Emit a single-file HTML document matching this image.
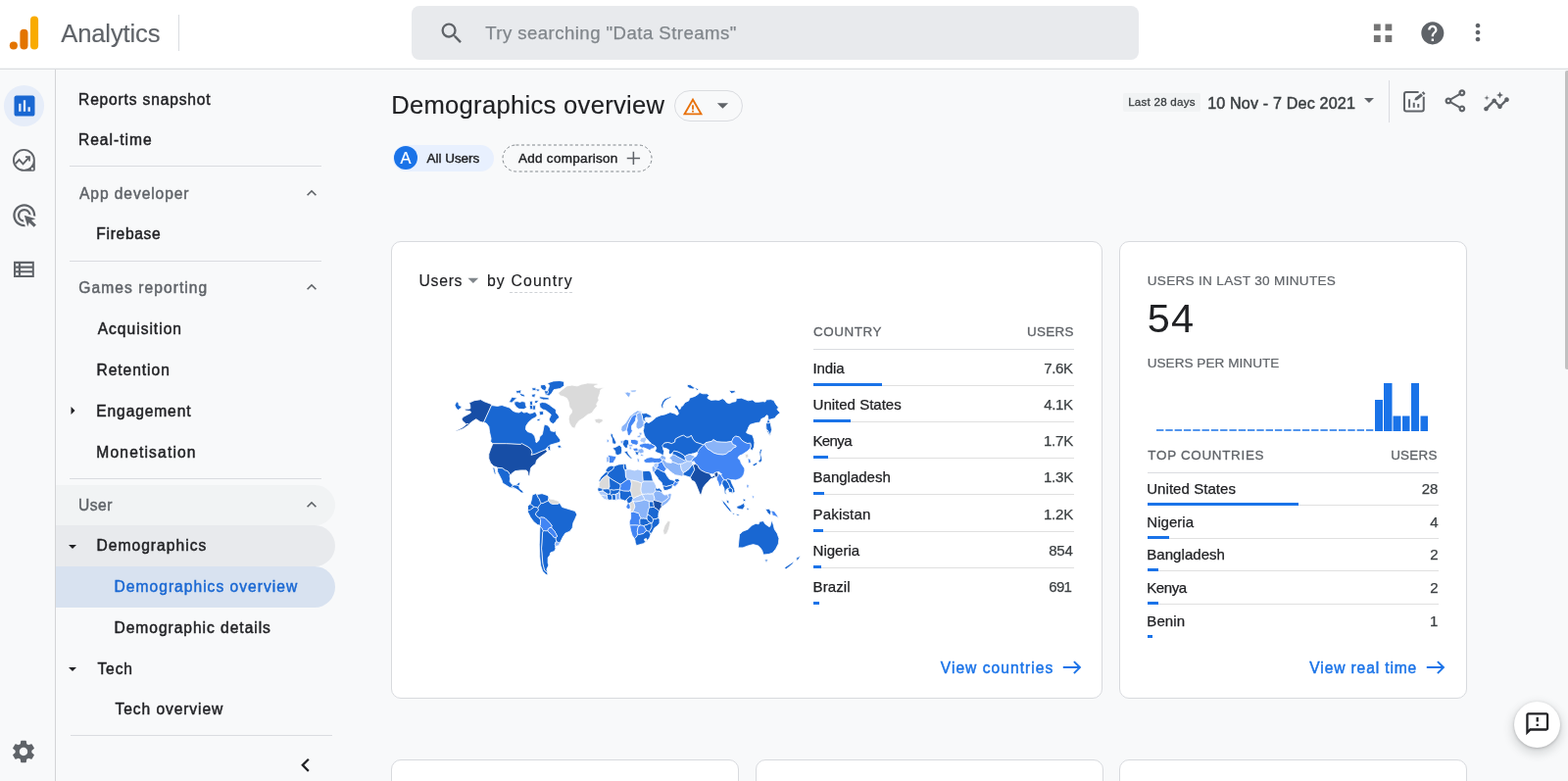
<!DOCTYPE html>
<html lang="en">
<head>
<meta charset="utf-8">
<title>Analytics – Demographics overview</title>
<style>
*{box-sizing:border-box;margin:0;padding:0}
html,body{width:1600px;height:797px;overflow:hidden;background:#f8f9fa}
body{font-family:"Liberation Sans",Arial,sans-serif;color:#202124;position:relative;-webkit-font-smoothing:antialiased}
#txt{position:absolute;left:0;top:0;width:1600px;height:797px;will-change:transform}
.abs{position:absolute}
.t{position:absolute;white-space:nowrap;line-height:1}
svg{display:block;position:absolute}
#header{left:0;top:0;width:1600px;height:71px;background:#fff;border-bottom:1px solid #dcdee1;box-shadow:inset 0 -1px 0 #f3f4f5}
#search{left:420px;top:6px;width:742px;height:55px;background:#e8eaed;border-radius:8px}
#rail{left:0;top:71px;width:57px;height:726px;background:#f8f9fa;border-right:1px solid #d3d4d6}
.nav{font-size:16px;color:#202124;letter-spacing:.25px}
.navh{font-size:16px;color:#5f6368;letter-spacing:.25px}
.hr{position:absolute;height:1px;background:#dadce0}
.card{position:absolute;background:#fff;border:1px solid #d8dade;border-radius:10px}
.th{font-size:12.5px;letter-spacing:1.1px;color:#5f6368}
.td{font-size:14.5px;color:#202124;letter-spacing:.1px}
.bar{position:absolute;height:3px;background:#1a73e8}
.rl{position:absolute;height:1px;background:#e0e0e0}
.link{font-size:16px;color:#1a73e8;letter-spacing:.3px}
</style>
</head>
<body>
<!-- header -->
<div id="header" class="abs"></div>
<svg style="left:8px;top:15px" width="34" height="38" viewBox="0 0 34 38">
  <rect x="23" y="1.500" width="8.100" height="34.100" rx="4.050" fill="#f9ab00"/>
  <rect x="12.400" y="14.700" width="8.100" height="20.900" rx="4.050" fill="#e37400"/>
  <circle cx="5.850" cy="31.550" r="4.050" fill="#e37400"/>
</svg>
<div class="abs" style="left:182px;top:15px;width:1px;height:37px;background:#dadce0"></div>
<div id="search" class="abs"></div>
<svg style="left:447px;top:20px" width="28" height="28" viewBox="0 0 24 24" fill="#5f6368"><path d="M15.5 14h-.79l-.28-.27A6.471 6.471 0 0 0 16 9.5 6.5 6.5 0 1 0 9.500 16c1.610 0 3.090-.59 4.230-1.570l.27.28v.79l5 4.990L20.490 19l-4.990-5zm-6 0C7.010 14 5 11.990 5 9.500S7.010 5 9.500 5 14 7.010 14 9.500 11.990 14 9.500 14z"/></svg>
<svg style="left:1401px;top:24px" width="20" height="20" viewBox="0 0 20 20" fill="#757575"><path d="M.9.400h6.800v6.800H.9zM12.500.400h6.800v6.800h-6.800zM.9 12.100h6.800v6.800H.9zM12.500 12.100h6.800v6.800h-6.800z"/></svg>
<svg style="left:1447.900px;top:19.600px" width="27.700" height="27.700" viewBox="0 0 24 24" fill="#5f6368"><path d="M12 2C6.480 2 2 6.480 2 12s4.480 10 10 10 10-4.480 10-10S17.520 2 12 2zm1 17h-2v-2h2v2zm2.070-7.750-.9.920C13.450 12.900 13 13.500 13 15h-2v-.5c0-1.100.45-2.100 1.170-2.830l1.240-1.260c.37-.36.59-.86.59-1.410 0-1.100-.9-2-2-2s-2 .9-2 2H8c0-2.210 1.790-4 4-4s4 1.790 4 4c0 .88-.36 1.680-.93 2.250z"/></svg>
<svg style="left:1494.400px;top:19.300px" width="28" height="28" viewBox="0 0 24 24" fill="#5f6368"><path d="M12 8c1.100 0 2-.9 2-2s-.9-2-2-2-2 .9-2 2 .9 2 2 2zm0 2c-1.100 0-2 .9-2 2s.9 2 2 2 2-.9 2-2-.9-2-2-2zm0 6c-1.100 0-2 .9-2 2s.9 2 2 2 2-.9 2-2-.9-2-2-2z"/></svg>

<!-- left rail -->
<div id="rail" class="abs"></div>
<div class="abs" style="left:3.500px;top:87.100px;width:41.800px;height:41.800px;border-radius:50%;background:#e6edf9"></div>
<svg style="left:10.700px;top:93.700px" width="28" height="28" viewBox="0 0 24 24" fill="#1967d2"><path d="M19 3H5c-1.100 0-2 .9-2 2v14c0 1.100.9 2 2 2h14c1.100 0 2-.9 2-2V5c0-1.100-.9-2-2-2zM9 17H7v-7h2v7zm4 0h-2V7h2v10zm4 0h-2v-4h2v4z"/></svg>
<svg style="left:11px;top:150px" width="27" height="27" viewBox="11 150 27 27">
  <path fill="#5f6368" fill-rule="evenodd" d="M24.400 152A11.400 11.400 0 1 0 24.400 174.800H34Q35.800 174.800 35.800 173V163.400A11.400 11.400 0 0 0 24.400 152ZM24.400 153.850A9.550 9.550 0 1 1 24.400 172.950A9.550 9.550 0 1 1 24.400 153.850ZM33 171.100A1.200 1.200 0 1 0 33 173.500A1.200 1.200 0 1 0 33 171.100Z"/>
  <path fill="none" stroke="#5f6368" stroke-width="2" d="M15.700 167.200 19.600 162.900 23.500 167.300 29.600 160.600"/>
  <path fill="#5f6368" d="M26 159.200H30.900V164.600H29.200V162.400L27.900 160.900H26Z"/>
</svg>
<svg style="left:10.600px;top:205.500px" width="27.600" height="27.600" viewBox="0 0 24 24" fill="#5f6368"><path d="M11.710 17.990A5.993 5.993 0 0 1 6 12c0-3.310 2.690-6 6-6 3.220 0 5.840 2.530 5.990 5.710l-2.100-.63a3.999 3.999 0 1 0-4.810 4.810l.63 2.100zM22 12c0 .3-.01.6-.04.9l-1.970-.59c.01-.1.01-.21.01-.31 0-4.420-3.580-8-8-8s-8 3.580-8 8 3.580 8 8 8c.1 0 .21 0 .31-.01l.59 1.970c-.3.03-.6.04-.9.040-5.520 0-10-4.480-10-10S6.480 2 12 2s10 4.480 10 10zm-3.770 4.260L22 15l-10-3 3 10 1.260-3.770 4.270 4.270 1.980-1.980-4.280-4.260z"/></svg>
<svg style="left:11px;top:262px" width="27" height="27" viewBox="11 262 27 27">
  <path fill="#5f6368" fill-rule="evenodd" d="M14 266.800H34.800V283H14ZM16 269V271.600H18.800V269ZM21 269V271.600H32.800V269ZM16 273.700V276.300H18.800V273.700ZM21 273.700V276.300H32.800V273.700ZM16 278.300V280.900H18.800V278.300ZM21 278.300V280.900H32.800V278.300Z"/>
</svg>
<svg style="left:10.300px;top:753.200px" width="28" height="28" viewBox="0 0 24 24" fill="#5f6368"><path d="M19.140 12.940c.04-.3.06-.61.06-.94 0-.32-.02-.64-.07-.94l2.030-1.580a.49.49 0 0 0 .12-.61l-1.920-3.320a.488.488 0 0 0-.59-.22l-2.390.96c-.5-.38-1.030-.7-1.620-.94l-.36-2.540a.484.484 0 0 0-.48-.41h-3.840c-.24 0-.43.17-.47.41l-.36 2.540c-.59.24-1.130.57-1.620.94l-2.390-.96c-.22-.08-.47 0-.59.22L2.740 8.870c-.12.21-.08.47.12.61l2.030 1.580c-.05.3-.09.63-.09.940s.02.640.07.940l-2.030 1.580a.49.49 0 0 0-.12.610l1.920 3.320c.12.22.37.29.59.22l2.390-.96c.5.38 1.030.7 1.620.94l.36 2.540c.05.240.24.410.48.410h3.840c.24 0 .44-.17.47-.41l.36-2.540c.59-.24 1.130-.56 1.620-.94l2.390.96c.22.080.47 0 .59-.22l1.920-3.320c.12-.22.07-.47-.12-.61l-2.010-1.580zM12 15.600c-1.980 0-3.600-1.620-3.600-3.600s1.620-3.600 3.600-3.600 3.600 1.620 3.600 3.600-1.620 3.600-3.600 3.600z"/></svg>

<!-- nav -->
<div class="abs" style="left:57px;top:495px;width:285px;height:41px;background:#f1f3f4;border-radius:0 21px 21px 0"></div>
<div class="abs" style="left:57px;top:536px;width:285px;height:42px;background:#e8eaed;border-radius:0 21px 21px 0"></div>
<div class="abs" style="left:57px;top:578px;width:285px;height:42px;background:#d8e2f0;border-radius:0 21px 21px 0"></div>
<div class="hr" style="left:71px;top:169px;width:257px"></div>
<div class="hr" style="left:71px;top:266px;width:257px"></div>
<div class="hr" style="left:71px;top:488px;width:257px"></div>
<div class="hr" style="left:72px;top:750px;width:267px"></div>
<svg style="left:308px;top:187px" width="20" height="20" viewBox="0 0 24 24" fill="#5f6368"><path d="m12 8-6 6 1.410 1.410L12 10.830l4.590 4.580L18 14z"/></svg>
<svg style="left:308px;top:283px" width="20" height="20" viewBox="0 0 24 24" fill="#5f6368"><path d="m12 8-6 6 1.410 1.410L12 10.830l4.590 4.580L18 14z"/></svg>
<svg style="left:308px;top:505px" width="20" height="20" viewBox="0 0 24 24" fill="#5f6368"><path d="m12 8-6 6 1.410 1.410L12 10.830l4.590 4.580L18 14z"/></svg>
<svg style="left:71px;top:414px" width="8" height="10" viewBox="0 0 8 10" fill="#202124"><path d="M1.500 1l4 4-4 4z"/></svg>
<svg style="left:69px;top:554px" width="10" height="8" viewBox="0 0 10 8" fill="#202124"><path d="M1 2h8L5 6z"/></svg>
<svg style="left:69px;top:679px" width="10" height="8" viewBox="0 0 10 8" fill="#202124"><path d="M1 2h8L5 6z"/></svg>
<svg style="left:298.300px;top:767.300px" width="27.500" height="27.500" viewBox="0 0 24 24" fill="#202124"><path d="M15.410 7.410 14 6l-6 6 6 6 1.410-1.410L10.830 12z"/></svg>
<!-- page title row -->
<div class="abs" style="left:688px;top:92px;width:70px;height:32px;border:1px solid #dadce0;border-radius:16px"></div>
<svg style="left:696.200px;top:97.700px" width="22" height="22" viewBox="0 0 24 24" fill="#e8710a"><path d="M12 5.990 19.530 19H4.470L12 5.990M12 2 1 21h22L12 2z"/><path d="M13 16h-2v2h2zM13 10h-2v5h2z"/></svg>
<svg style="left:724px;top:94.200px" width="26.900" height="26.900" viewBox="0 0 24 24" fill="#5f6368"><path d="m7 10 5 5 5-5z"/></svg>

<div class="abs" style="left:1146px;top:95px;width:79px;height:19px;background:#f1f3f4;border-radius:2px"></div>
<svg style="left:1384.800px;top:90.300px" width="24" height="24" viewBox="0 0 24 24" fill="#5f6368"><path d="m7 10 5 5 5-5z"/></svg>
<div class="abs" style="left:1417px;top:82px;width:1px;height:43px;background:#dadce0"></div>
<svg style="left:1428px;top:88px" width="30" height="30" viewBox="1428 88 30 30">
  <path fill="none" stroke="#5f6368" stroke-width="2" d="M1447.600 94H1435Q1433 94 1433 96V111.600Q1433 113.600 1435 113.600H1450.750Q1452.750 113.600 1452.750 111.600V98.800"/>
  <path fill="#5f6368" d="M1437.100 101.250h2v8.500h-2zM1441.750 104.750h2v5h-2zM1446.250 106h2v3.750h-2z"/>
  <path fill="#5f6368" d="M1443.25 102.30 1446.02 102.13 1451.89 97.63 1450.01 95.17 1444.13 99.67Z"/>
  <path fill="#5f6368" d="M1452.69 97.03 1454.43 95.69 1452.55 93.23 1450.80 94.56Z"/>
</svg>
<svg style="left:1471px;top:89.200px" width="27.800" height="27.800" viewBox="0 0 24 24" fill="#5f6368"><path d="M18 16.080c-.76 0-1.440.3-1.960.77L8.910 12.700c.05-.23.09-.46.09-.7s-.04-.47-.09-.7l7.050-4.110c.54.5 1.250.81 2.040.81 1.660 0 3-1.340 3-3s-1.340-3-3-3-3 1.340-3 3c0 .24.04.47.09.7L8.040 9.810C7.500 9.310 6.790 9 6 9c-1.660 0-3 1.340-3 3s1.340 3 3 3c.79 0 1.500-.31 2.040-.81l7.120 4.160c-.05.21-.08.43-.08.65 0 1.610 1.310 2.920 2.920 2.920s2.920-1.310 2.920-2.920c0-1.610-1.310-2.920-2.920-2.920zM18 4c.55 0 1 .45 1 1s-.45 1-1 1-1-.45-1-1 .45-1 1-1zM6 13c-.55 0-1-.45-1-1s.45-1 1-1 1 .45 1 1-.45 1-1 1zm12 7.020c-.55 0-1-.45-1-1s.45-1 1-1 1 .45 1 1-.45 1-1 1z"/></svg>
<svg style="left:1513px;top:90px" width="28" height="28" viewBox="0 0 24 24" fill="#5f6368"><path d="M21 8c-1.450 0-2.260 1.440-1.930 2.510l-3.550 3.560c-.3-.09-.74-.09-1.040 0l-2.550-2.550C12.270 10.450 11.460 9 10 9c-1.450 0-2.270 1.440-1.930 2.520l-4.560 4.550C2.440 15.740 1 16.550 1 18c0 1.100.9 2 2 2 1.450 0 2.260-1.440 1.930-2.510l4.550-4.560c.3.09.74.09 1.040 0l2.550 2.550C12.730 16.550 13.540 18 15 18c1.450 0 2.270-1.440 1.930-2.520l3.560-3.550c1.070.33 2.510-.48 2.510-1.930 0-1.100-.9-2-2-2z"/><path d="m15 9 .94-2.070L18 6l-2.060-.93L15 3l-.92 2.070L12 6l2.080.93zM3.500 11 4 9l2-.5L4 8l-.5-2L3 8l-2 .5L3 9z"/></svg>

<!-- comparison chips -->
<div class="abs" style="left:401px;top:148px;width:103px;height:27px;background:#e8f0fe;border-radius:14px"></div>
<div class="abs" style="left:402px;top:149px;width:24px;height:24px;background:#1a73e8;border-radius:50%"></div>
<svg style="left:512px;top:147px" width="154" height="29" viewBox="0 0 154 29" fill="none"><rect x="1" y="1" width="152" height="27" rx="13.500" stroke="#80868b" stroke-width="1" stroke-dasharray="3 2.500"/></svg>
<svg style="left:635.400px;top:150px" width="22.800" height="22.800" viewBox="0 0 24 24" fill="#5f6368"><path d="M19 12.800h-6.200V19h-1.600v-6.200H5v-1.600h6.200V5h1.600v6.200H19v1.600z"/></svg>
<!-- card 1: users by country -->
<div class="card" style="left:399px;top:246px;width:726px;height:467px"></div>
<svg style="left:469.600px;top:273.300px" width="25.700" height="25.700" viewBox="0 0 24 24" fill="#80868b"><path d="m7 10 5 5 5-5z"/></svg>
<div class="abs" style="left:519.500px;top:297.500px;width:64.500px;height:0;border-top:1px dashed #cfd2d6"></div>

<div class="rl" style="left:830px;top:356px;width:266px;background:#dadce0"></div>
<svg style="left:1080px;top:670px" width="28" height="22" viewBox="1080 670 28 22" fill="none" stroke="#1a73e8" stroke-width="2"><path d="M1084.800 681.100H1101.700M1095.900 675.100 1101.900 681.100 1095.900 687.100"/></svg>
<!-- world choropleth -->
<svg style="left:455px;top:380px" width="370" height="215" viewBox="455 380 370 215" stroke="#fff" stroke-width=".8" stroke-linejoin="round">
<path fill="#1967d2" stroke="none" d="M665.5 533.7L664.7 533.9L664.5 534.3L664.7 534.6Z"/>
<path fill="#8ab4f8" d="M637.3 400.6L641.2 405.6L641.4 405.5L642.8 403.8L643.6 401L640.5 400.1Z"/>
<path fill="#8ab4f8" d="M643.2 398.7L644.8 400.2L648.9 400L649.2 398.3L649.1 398L648.8 397.9L643.3 398.2Z"/>
<path fill="#1967d2" d="M654.9 420.9L654.4 421L654.1 421.6L655.2 425L655.3 426.4L655.8 427.8L655.9 429.5L656.7 430.4L657 430.3L656.8 429.4L658.5 430.2L658.8 430.8L658.6 431.4L657.3 432.5L657 431.5L656.6 432.2L656.8 434.4L656.7 435L657.1 435.4L657.2 435.8L656.3 439.5L657.4 444.1L658.2 445.2L658 446L659.8 448.2L660.4 448.2L660.8 448.4L662.7 450.9L663.9 451.8L664 452.8L665.1 453.6L668.3 455.2L668.6 455.7L669.3 456.1L669.7 457.6L668.3 460.3L670.3 461.8L674.8 463.4L675.3 463.9L675.4 464.6L676.9 465.1L677.1 464.9L676.9 464.5L677.6 460.6L676.6 457.9L676.6 457.5L676.9 457L676.2 454.8L676.9 453.9L677.4 453L677.9 452.4L681.6 451.7L685.4 452.8L688.8 451.3L689.2 448.2L692.2 446.4L694.4 445.8L694.3 445.5L697.3 444.4L700.8 446.5L703.9 446.1L705.2 444.5L706.9 448.2L709.5 451.3L714 452.7L717.5 454L717.6 453.9L717.8 454.2L719 453.2L720.1 451.9L726.1 450.6L728 448.8L731.7 451L736 451.4L741.2 451.5L746.4 450.6L746.7 450.7L746.9 450.6L748.5 446.8L751 445.3L754.4 446.2L756.8 449.3L759.8 451.5L762.7 452.8L765.5 452.4L766 454.6L766 455.6L765.2 458.1L767.6 459.7L769.5 456.1L769.9 451.7L769 447.3L767.6 443.7L764 442.8L761.9 441.8L761.5 441.2L763.3 437.7L763.3 437L765.2 433.5L765.7 433.2L771.5 431.5L775.4 431.1L776.8 427.6L780.7 425.8L781.8 424.1L782.2 423.8L783.1 423.9L783.6 424.3L783.8 428.5L784.2 428.5L784.4 428.8L785.2 428.3L790.8 426.7L792.6 424L796.1 421.3L793.1 418.1L793.1 417.4L794.4 415.9L791.7 412.4L789.5 408.5L786.4 407.6L781.5 408L781.3 409.6L780.8 410L778.4 409.7L774.1 410.2L770.9 410.2L770.4 410.1L767.9 408L763.5 408.8L756.5 406.2L751.2 406.7L751.1 409.2L750.8 409.7L747.7 410.2L744.1 411.8L741.3 410.7L739.9 408.5L737.2 406.7L733.6 408.4L730.1 408L725.6 408.4L722.3 406.7L722 406.3L722 405.6L723.6 403.4L723.6 403.2L721.4 401.8L717 401.8L713.9 400.5L712.4 402.3L709.1 404.4L703.7 406.2L702.8 408.9L698.9 410.7L696.7 414.1L694.9 415.1L694.2 417.2L693.9 417.6L693.3 417.6L692.9 417.4L691.9 415.1L689.7 412.9L689.5 412.9L688.2 415.2L690.8 417.9L692.4 421.7L692.3 422.4L691.1 423.5L690.5 423.5L688.4 422.1L683.9 420.7L678.6 422.9L674.2 423.8L669.8 425.6L666.3 428.7L662.3 431.4L661.8 431.6L659.1 430.2L657.9 427.8L658 427.1L658.7 426.1L659.1 425.9L662 426.2L665.1 425.8L665.1 425.6L663.8 423.8L659.4 421.6L655.5 422Z"/>
<path fill="#1967d2" d="M787 434.4L786.5 434.1L786.2 434.6L786.8 437.6L787.2 437.9L787.5 437.6L787.6 437ZM781.2 436.2L783 440.8L785.2 444.3L785.5 444.5L785.8 444.4L786.1 444L786.1 443.1L784.6 440.1L782.4 437.5L782.2 434.5L781.8 434.1L781.4 434.5ZM784.6 428.2L783.9 427.9L783.5 428.3L782.1 432.1L782.3 432.5L785.7 431.9L785.9 431.8L785.9 431.2L784.9 429.3L784.9 428.6Z"/>
<path fill="#1967d2" d="M680.6 407.7L684.9 405.8L684.5 404.6L678.6 406.7L675.9 409.8L674.6 413.3L675.1 416.1L677 417L676.6 413.8L677.9 410.4Z"/>
<path fill="#1967d2" d="M701.2 393.9L701.4 394.4L703.7 396.2L707.2 397.1L707.6 397L708.6 395.8L708.4 395.5L704.7 392.8L701.8 392.4Z"/>
<path fill="#1967d2" d="M710.9 398.2L711.5 398.3L712.8 397.4L712.9 396.9L710.1 395.9L709.7 395.9L709.6 396.2L709.6 396.5Z"/>
<path fill="#1967d2" d="M746.1 401.3L746.5 401.5L750 400.6L750.2 400.4L750.3 400.1L749.8 398.8L749.5 398.5L744.4 398.6L744.3 399.1Z"/>
<path fill="#1967d2" d="M781.5 432.3L782 437.7L784.2 440.3L785.6 443.3L785.6 444L786.1 443.9L787.5 438.5L786.1 431.4L785.5 431.1L785.4 431.2L785.4 431.5L782.7 432L782.8 431.8L782.6 431.7L782.2 432.1Z"/>
<path fill="#8ab4f8" d="M638.3 439.8L638.7 439.3L639.5 439.1L639.6 438L640 437.2L641.1 432.6L644.2 426.5L644.8 425.9L645.4 424.5L646.6 424L647.8 423.3L648.1 423.4L648.4 423.2L648.6 423.5L648.9 423.3L649 423.6L649.3 423.4L649.5 423.7L649.9 423.5L649.9 423L650.1 422.9L650.1 422.5L650.4 422.3L650.5 422L652.7 421.2L653.2 421.2L653.4 421.1L653.6 421.3L653.9 421.1L654 421.4L654.4 421.4L654.9 420.9L654.2 419.5L650.5 419L647 421.2L642.6 424.7L638.2 431.8L634.2 435.3L633.7 438.8L635.5 441.1Z"/>
<path fill="#4285f4" d="M639.2 439.2L639.9 439.8L640.3 443.3L642.2 445.1L643.7 442.4L645.4 439.8L644.5 437.9L644.6 434.5L646.7 431.9L648.5 429.3L648.9 425.8L649.6 425.8L649.8 426.3L650.3 425.9L650.2 425.2L649.4 423.1L649.1 423.3L648.9 423L648.7 423.2L648.4 422.9L647.8 423L646.5 423.8L645.2 424.3L644.6 425.8L644 426.4L640.9 432.6L639.8 437.2L639.4 438Z"/>
<path fill="#8ab4f8" d="M649.8 426.6L650.4 429.2L649.1 432.7L649.1 436.2L651.5 438.1L654.6 436.8L655.9 435.2L656.3 435L656.8 435.1L657.1 434.5L656.8 432.2L657.1 432L657 430.3L656.1 429.2L655.4 424.9L654 420.9L652.6 420.9L650.3 421.7L650.2 422.2L649.9 422.3L649.9 422.7L649.6 423L649.7 423.3L649.4 423.6L650 425.4L649.9 426.4Z"/>
<path fill="#1967d2" d="M627.4 453.2L629 451.9L627.1 447.7L625.6 445.5L625.2 442.9L623.2 442.1L623.1 444.8L624.3 447.1L625 452.7Z"/>
<path fill="#8ab4f8" d="M619.1 451.2L619.5 451.6L621.2 451.5L621.7 448.7L619.5 448.2L619.2 448.3L619.1 448.6Z"/>
<path fill="#1967d2" d="M625.8 457.1L625 457.6L627.6 459.9L628.1 463.7L630.4 464.5L633.9 463.3L634.7 459.9L634.3 456.4L632 454.1L628.8 456Z"/>
<path fill="#1967d2" d="M635.1 452.2L635.2 453.1L636.3 455L638.2 457.3L640.7 456.9L640.3 454.6L640.9 453.9L641.4 453.8L641.8 453.2L641.4 449.2L638.6 448.4L636 449.6L635.5 449.9L635.2 451.1L635.3 451.9Z"/>
<path fill="#4285f4" d="M620.5 465.4L620.4 466.2L620.8 466.7L620.9 471.2L621.4 471.5L622.5 472.8L626 472.3L626.7 470.4L628.2 468.2L629 465.8L620.2 464.3Z"/>
<path fill="#8ab4f8" d="M620.7 465.9L619.9 466.2L619.1 466.2L618.7 466.6L618.9 471.5L619 471.8L619.3 471.9L621.3 471.4L621.4 471.1L621.3 466.5Z"/>
<path fill="#1967d2" d="M641 462.7L640.2 460.1L636.7 460.9L641.2 466L643.9 468.2L645.2 467.8L643.3 465.8Z"/>
<path fill="#4285f4" d="M644.7 452.6L644.9 453.6L645.4 453.7L646.2 453.4L649.3 454.3L651.2 453.1L651.2 449.6L647.7 448.4L643.5 448.5L643.4 451.6Z"/>
<path fill="#4285f4" d="M656.2 456.8L657.5 457L663.2 459.6L664.4 458.1L667.3 457.7L668 456.1L668.8 455.6L668.4 455L665.2 453.4L664.2 452.6L663.6 453L663.2 453.1L661.3 452.2L658.8 452.4L658.2 451.8L656.5 452L656.3 452.6L655.9 452.8L653 453.3L652.1 455.3L654.4 456.6L654.8 457.3L655.3 457.4L655.7 456.9Z"/>
<path fill="#aecbfa" d="M653.8 447.5L652.9 449.7L654.4 451.3L656 451.4L656.3 451.7L656.6 452.3L658.3 452L658.3 451.3L659.6 448.6L660 448.2L658.2 445.9L654.6 446.8L653.9 446.7L653.8 446.8Z"/>
<path fill="#8ab4f8" d="M651 460.6L650.9 461.1L651.7 461.8L652.2 462L652.9 462.6L653.4 462.7L653.9 463.2L654.1 463.2L654.7 462.5L656.8 462.2L657.2 459.9L655.5 458L655.4 457.2L654.8 457.1L654.5 457.7L654.1 457.9L650.6 458.3L650.6 459.9Z"/>
<path fill="#8ab4f8" d="M633.3 452.5L635.2 452.7L635.7 452.3L636 449.8L635.8 449.6L634.9 449.5L633 449.8Z"/>
<path fill="#8ab4f8" d="M641.1 453.9L641.8 454.4L642.1 455.4L642.6 456.3L642.8 456.4L643.6 456.5L644.3 455.8L645.8 455.7L645.8 455.4L645.5 454.2L645.7 453.5L645.3 453.2L644.8 453.2L644.5 453.6L644.1 453.7L642.4 453.5L641.9 452.9L641.6 452.9L641 453.6Z"/>
<path fill="#4285f4" d="M648 460.3L648.5 460.9L648.9 460.9L649.6 460.2L650.2 460.1L650.8 460.3L651 460.1L651.1 459.1L650.9 458.1L650.4 457.9L650.1 457.1L649.8 457.1L646.2 457.4L645.9 457.5L645.8 457.9L646.8 460.3Z"/>
<path fill="#8ab4f8" d="M642.6 455.8L642.1 456.8L642 458.6L644.1 459L644.7 457.3L644.6 457L644 456.6L644 455.9L642.9 455.7Z"/>
<path fill="#1967d2" d="M648.2 461.4L648.8 463.9L651 464.4L651.4 464.3L651.5 464L651.4 462.5L652 461.8L651.9 461.4L651.3 460.8L650.9 460.7L650.3 461.2L649.6 461.1L649.3 460.9L649.2 460.3L648.7 460.2L648.4 460.3Z"/>
<path fill="#8ab4f8" d="M650.3 470.8L650.5 471.1L651.9 471.9L652.4 471.8L652.5 468.3L650.4 467.8L650.1 467.9L650 468.2Z"/>
<path fill="#8ab4f8" d="M653.6 462.9L653.4 464L653.6 465.5L656.4 465.8L656.7 464.3L656.7 464L654.7 463.7L654.3 462.8L654 462.7Z"/>
<path fill="#8ab4f8" d="M654.1 444L655.2 443.5L654.7 441.1L652.2 441.4L651.9 441.6L652.5 443.7L652.5 444.5L652.8 444.7L653.4 444.6Z"/>
<path fill="#8ab4f8" d="M652 444.3L650 444.6L650 444.9L650.5 446.7L653.9 446.5L653.7 444.1L653.5 443.9L652.7 443.9Z"/>
<path fill="#4285f4" d="M667.2 472L667.5 473.1L667.6 472.9L670.9 472.5L671.7 472.8L672.8 472.7L673.8 472.1L675.3 471.4L675.5 471.1L675.6 469.8L675.8 469.4L675.5 468.8L674.9 468.2L674.1 467L673.8 466.7L673.2 467.3L668.8 467.6L664.3 466.5L660.5 467.3L657 469.3L657 470.9L659 472.4L662.8 472.4Z"/>
<path fill="#8ab4f8" d="M673.6 466.7L674.7 468.4L675.7 469.5L676.3 469.2L678.9 469.7L679.8 467L677 464.8L676.5 464.9L676 464.5L675.5 464.4L674.7 465Z"/>
<path fill="#174ea6" d="M490.6 407.7L484 408.7L478.7 411.1L479.7 413.5L479.9 416.5L479.7 416.9L479.2 417.2L474.6 417.3L474.5 418.8L479.9 419.7L480.3 420L480.4 420.4L480.4 421.1L480.1 421.5L472.5 425.6L471.1 427.8L472.1 429.7L475.4 432.6L475.7 433.2L476.2 433L476.7 433.1L477 432.9L478.1 433.5L480.6 431L485.7 427.7L486.2 427.9L490.1 430.4L492.9 431.1L493.9 430.8L501.6 413.7L501.3 413.1L501.3 412.4L493.7 409.6Z"/>
<path fill="#174ea6" d="M472.4 435.9L465.4 439.4L465.2 439.9L465.7 440.1L472.7 437.5L478.2 433.7L478.4 433.4L478.2 433.1L477.2 432.4L476 432.6L475.5 432.9L475.2 433.6Z"/>
<path fill="#1967d2" d="M468.2 413.4L467.9 410.9L465.9 409.8L464.1 413.6L465.3 416.3L467.5 418.4L470.8 416L470.9 414.4L468.7 414Z"/>
<path fill="#1967d2" d="M494.2 431.2L496.3 432L498.8 435.4L499.7 441.5L501.1 447.6L500.6 450.6L502.6 452.4L502.9 452.9L516.5 453L531.3 453.7L532.3 452.9L538.4 456L541.5 458.4L542.7 461.7L541.7 464.6L546.4 463.4L557 458.9L557.1 458.4L558.1 457L558.9 456.7L559 456.5L560.1 455.6L560.8 455.4L560.9 454.7L561.7 454L571 451.3L572 449L567.6 443.2L566.8 438.8L566.6 438.8L566.2 440.2L565.7 440.5L562.2 439.8L561.9 439.4L561.4 437L558.9 434L556.1 433.3L555.2 434L553.4 443.2L550.8 445.8L550.1 449L548 451.4L547.4 451.5L546.9 451.3L546.7 450.8L546.8 449.7L545.6 445.1L542.9 442L538.3 440.6L536.4 438L536.9 434.5L539.4 430.8L542.9 427.7L546.5 425.9L548.2 424L546.1 419.9L543.8 421.2L540.8 422.1L537.6 420.5L534.5 421.1L532.2 419.6L529.6 421L526.3 420.6L523.2 419.2L520 416.1L512.1 413.5L507.7 414.4L501.5 413.6L493.7 430.7Z"/>
<path fill="#1967d2" d="M553.7 417.7L554.7 418.2L555.2 418.2L557.2 419L562.1 422.9L562.2 423.6L560.1 428L561.6 430.9L564.4 432.6L566.8 430.8L568.3 428.1L570.9 426.1L569.5 423.4L567.4 421.2L567.3 417.9L564 415.7L560.5 413.1L557 410.9L553.4 410.5L550.3 411.5L551 415.8Z"/>
<path fill="#1967d2" d="M556.6 401.8L555.9 403L556 403.1L560.3 404L563 401.3L565.3 397.6L571.5 396.6L575.6 393.7L575.6 389.4L571 388.5L564.8 388.9L558.6 390.9L558.6 391.1L560.5 393L560.6 393.6L559.6 396.6L558.2 399.1L558.3 399.2L559 399.1L558.6 401.4Z"/>
<path fill="#1967d2" d="M555.6 398.5L556.1 399.1L556.8 398.9L556.7 398.2L557.7 395.4L556.1 392.4L551.5 392.9L551.7 395.4L553.1 397.6Z"/>
<path fill="#1967d2" d="M524.8 410.1L525 412.7L526.8 415.4L529.6 417.3L534.2 417.7L537.5 416.1L536.5 413.8L536 410.2L532.8 409.6L530.4 410.4L527.9 409.6Z"/>
<path fill="#1967d2" d="M522.2 411L523.5 409.8L524.2 409.7L524.5 408.8L527.7 406.1L522.4 405.2L519.3 410.4Z"/>
<path fill="#1967d2" d="M550.8 406.7L554.3 407.9L560.1 407.9L560.2 407.7L559.9 405.7L550.6 404.7L550.5 404.8Z"/>
<path fill="#1967d2" d="M540.8 413.5L541.1 414.2L541.4 414.3L543.1 414.1L543.6 413.8L543.3 409.1L540.4 409.5Z"/>
<path fill="#1967d2" d="M545.6 411.2L546 411.5L548 411.3L548.3 411.1L549.5 408.7L549.1 408.4L545.4 409Z"/>
<path fill="#1967d2" d="M542.6 413.8L543 417.5L543.5 418.2L546.3 418.2L546.7 414.1L546.6 413.8L544 413.8L543.3 413.3L543.1 413.3Z"/>
<path fill="#1967d2" d="M530 401L530.1 402L532 404.3L535.3 405.1L535.7 404.9L534.9 402.7L534.6 402.5L531.1 401.6L530.6 400.8L530.3 400.7Z"/>
<path fill="#1967d2" d="M542.8 404.8L543.1 405.1L545.7 405.4L546.4 402.4L546.3 402.1L546 401.9L542.5 402.4Z"/>
<path fill="#1967d2" d="M529.5 401L530.2 401.5L530.7 401.4L530.9 400.8L531.5 400.3L531.8 398.3L531.7 398L531.4 397.9L526.8 398.8L526.5 399L526.5 399.3L527.4 401.4Z"/>
<path fill="#1967d2" d="M546.4 398.5L547.4 397.9L547.5 397.6L546.9 396.9L546.8 395.8L543.2 395.7L542.9 395.8L542.8 396.1L543.3 398.4Z"/>
<path fill="#1967d2" d="M547.9 397L546.9 397.2L546.7 397.6L546.8 397.9L547.6 398.2L547.9 399.3L550.1 399.3L550.4 397.4L550.3 397.1Z"/>
<path fill="#1967d2" d="M554.4 419.5L550 419.9L551 424L554.7 423.1Z"/>
<path fill="#1967d2" d="M548.1 429.2L548.4 429.6L550.4 429.7L551.3 427.6L550.9 427.3L548 427.5Z"/>
<path fill="#1967d2" d="M540.3 414.5L540.9 417.9L542.9 417.7L543.4 417.8L543.6 417.7L543.7 416.7L543.4 413.5L541.3 413.5Z"/>
<path fill="#1967d2" d="M555.9 398.8L555.7 399.8L556.3 402.3L558.9 401.8L559.5 399L559.2 398.5L557.5 398.9L556.9 398.5L556.1 398.6Z"/>
<path fill="#1967d2" d="M569.7 457L570.1 457.2L572.8 456.7L573.1 456.3L571.2 454.3L570.9 454.2L569.1 454.7L568.9 454.9L568.9 455.2Z"/>
<path fill="#1967d2" d="M558.5 456.6L559.2 457.4L559.4 459.4L561.2 459.8L561.5 459.7L561.7 459.4L561.6 455.7L560.9 455L559.8 455.2L558.6 456.1Z"/>
<path fill="#174ea6" d="M507.4 476.9L507.9 477.6L512.8 478.1L515.3 480.1L518.1 481L520.4 484.8L521 484.7L522.1 483.3L525.5 480.7L531.4 479.9L537 479.9L538.5 481.3L539.1 485.4L540.5 485.6L540.9 481.8L541.6 477.7L543.1 475.9L546.6 473.3L547.5 469.8L550 467.2L556.1 462.8L558.4 460.4L557.2 459.3L557 458.8L556.7 458.7L546.3 463.2L542 464.3L543 461.8L541.7 458.2L538.5 455.8L532.4 452.6L531.2 453.4L516.5 452.7L502.9 452.7L500.6 458.2L498.8 463.5L498.8 468L500.6 472.4L503.8 475.8Z"/>
<path fill="#1967d2" d="M529.2 495.8L530 495.2L530.8 492.6L530.7 492.4L529.2 492.5L526.2 495.2ZM507.6 478.1L507.6 481.2L512 489.9L512.9 493L520 497.4L524.4 498.6L525.4 498.2L525.4 498L522.1 496.6L524.8 495L522.5 494.3L520.2 491.5L520.5 488.2L520.1 485.5L520.6 484.7L518.4 481L516.6 480.2L515.5 479.9L512.9 477.8L507.9 477.3Z"/>
<path fill="#1967d2" d="M504.4 483.3L504.6 483.6L505.7 483.9L506.1 483.8L504.7 477.8L504.5 477.5L503 477.1L502.8 477.5Z"/>
<path fill="#dadada" d="M606.3 394.4L606.4 393.9L606.8 393.5L611 392.4L611.1 392.3L608.4 391.3L599.6 390.9L593.4 392.2L589 393.9L583.8 393.1L578.5 393.9L573.2 397.9L569.6 401L571.5 403.8L575 404.7L578.4 406.4L580.1 409.9L581 415.2L583.5 418.4L583.6 418.9L583.2 421.3L581 423.9L580.2 427.5L581 431.9L583.7 436.3L586.5 437.2L588.3 432.8L590.9 429.4L595.3 426.7L599.6 423.2L604.1 421.4L605.8 418.7L609.4 414.3L608.7 412.8L608.7 412.4L611.1 408.2L610.4 406.2L612 402L612.8 397.9L613.2 397.5L617.7 395.3L610.2 396.1L606.8 394.9Z"/>
<path fill="#dadada" d="M607.6 431.2L611.5 432.3L615.3 430.1L614.8 427.7L611 427.1L606.8 427.8L606.7 427.9Z"/>
<path fill="#1967d2" d="M686.3 462.2L686.5 462.3L686.9 461.4L687.8 460.3L691.2 461.1L694.4 462.6L697.1 464.4L697.8 465.1L698.9 465.8L699.3 465.8L699.4 465.5L699.7 465.6L699.8 465.3L701.2 464.6L702.1 464.4L702.8 463.9L705.2 463.7L705.9 463L707.9 462.8L711 461.6L711.7 461.8L713 459.8L713.5 458.5L716.7 455.1L717.9 454.2L717.9 453.9L717.7 453.6L717.5 453.8L714 452.5L709.7 451.1L707.1 448.1L705.3 444.1L703.8 445.9L700.8 446.3L697.3 444.1L693.7 445.4L693.7 445.8L692.1 446.2L689.1 448.1L688.6 451.1L685.4 452.6L681.6 451.5L677.8 452.2L677.2 452.8L676.7 453.7L676 454.5L675.9 455L676 455.5L676.7 457.1L677.5 457L680 457.7L682.6 459.1L682.8 459.7L682.2 462.1L683.8 463.7Z"/>
<path fill="#8ab4f8" d="M718.8 453.7L718.7 454L721.8 458.3L724.7 459.9L728.1 462.5L732.5 463.8L737.7 464.2L741.5 463.4L743.1 461.5L745.9 460.3L748.5 457.3L751.4 456.2L751.5 455.9L751.1 454.5L747.8 453.2L746.9 450.7L746.7 450.4L741.2 451.2L736 451.1L731.7 450.8L728 448.6L726.1 450.4L720 451.7L718.5 453.6Z"/>
<path fill="#4285f4" d="M705.6 470.6L705.9 471.2L706.9 472.1L707 471.9L707.3 471.9L707.9 470.4L709.5 472.8L709.5 473.7L711.8 475.1L713.2 478.1L715.6 480.2L719.8 482.4L724.8 483.7L725.5 483.5L727.2 483.9L728.5 483.4L729.2 483.4L729.2 483.1L731 482.4L732 482.2L732.4 481.6L733.1 481.4L735 482.5L736.5 484L735.2 483.9L735.1 484.4L738 489.1L738.4 489.3L738.5 489.7L739.1 490L739.6 489.9L740.1 490.2L741.2 490.2L741.3 489.8L741.6 489.7L741.6 489.4L742.4 489L746 489.9L746.6 489.6L750.9 490L754.4 488.7L757.1 486.9L758.9 484.2L759.8 480.7L759.8 478L756.3 472.8L755.4 469.7L753.2 467.8L753.1 467L754.5 465L757.1 464.1L762.4 460.6L764.7 458.3L765.4 458.1L766.2 455.7L765.8 452.5L765.6 452.2L765.3 452.1L762.8 452.5L759.9 451.3L756.9 449.2L754.6 446L751 445.1L750.6 445.1L748.3 446.7L746.6 450.6L747.4 453.2L747.6 453.4L750.9 454.7L751.2 456L748.5 457L745.8 460.1L742.9 461.2L741.4 463.1L737.7 464L732.5 463.5L728.3 462.2L724.8 459.7L722 458.2L719 453.9L719.1 453.6L718.9 453.4L719 453.1L718.8 453.1L716.6 455L713.3 458.4L712.7 459.7L711.6 461.6L711.9 462.1L711.9 462.6L710.4 465.6L709.8 466L709 465.9L708.2 466.8L706.2 468.4L706.2 468.7L705.9 468.8L706 469.1L705.7 469.3L705.8 469.5L705.6 469.7L705.7 470L705.4 470.1L705.5 470.4L705.2 470.5L705.3 470.7Z"/>
<path fill="#174ea6" d="M704.4 487.2L706 490.4L708.4 491.2L708.7 491.5L710.4 494.8L713.9 503.6L715.3 505.4L717.6 497.4L720.2 494L722.9 491.3L725 488.8L729 487.4L730 486.5L730.3 486L730.1 485.3L729.7 485.1L729.4 484.7L726.6 486.4L725.9 486.4L725.5 486L725.5 485.4L724.7 484.6L724.8 483.8L724.4 483.3L719.9 482.1L715.7 480L713.3 478L712.1 475.1L711.7 474.7L709.7 473.5L708.8 474L706.7 473.6L707.3 471.8L706.5 471.4L706.4 471.6L706.6 471.8L706.3 471.9L706.4 472.2L706.1 472.3L706.3 472.5L706 472.7L706.2 472.9L706 473.1L706.2 473.4L706.1 473.7L706.7 474.4L706.9 474.3L708.4 479.4L704.6 486.3Z"/>
<path fill="#1967d2" d="M697 482.1L696.7 483.6L697 485.3L696.8 485.4L696.8 485.6L698.2 485.2L704.6 487.2L704.8 486.4L708.7 479.4L707.1 474.1L706.8 474.1L706.6 473.8L706.4 474L705.9 474.7L705.1 475.3L702.9 478.4L699.6 480.9L699 481.1L698 481.8Z"/>
<path fill="#aecbfa" d="M694.1 474.1L694.9 478.9L696.1 481.2L697.1 482.3L698.1 482L699.8 481.1L703.1 478.6L705.3 475.5L706.5 474.4L706.5 474L706.3 473.7L706.5 473.4L706.3 473.1L706.6 473L706.4 472.8L706.7 472.6L706.5 472.4L706.9 472.3L706.7 472L707 472L705.6 470.4L704.9 470.6L704.1 470.4L703.3 470.7L701.1 470.3L700.4 471L700 471L699.4 471.4L698.6 471.6L696.2 472.8L695.5 472.8L694.3 473.2L694.3 473.4L694.1 473.6L694.3 473.8Z"/>
<path fill="#8ab4f8" d="M675.3 471L675.1 471.4L675.6 471.6L677.6 475.5L679.9 478.7L680.8 478.1L683.8 481L686.8 483.3L688.2 484L688.4 484.7L692.1 485.2L695.5 486.1L697.2 485.5L697 484.8L697.2 484.1L697 483.6L697.2 482.6L697.2 482.1L696.3 481.1L695.1 478.8L694.4 474.6L694.5 474.3L694.4 474L694.6 473.8L694.4 473.6L694.6 473.3L693.2 473.2L692.7 473.5L692.3 473.4L692.1 473.7L691.4 473.1L688 471.7L685.4 471L685.2 471.2L685.2 472.5L680.2 471.8L678.7 470.4L679 469.5L678.2 469.4L677.4 469.1L676.2 469L675.9 469.1L675.5 469L675.6 469.4L675.2 470.5Z"/>
<path fill="#8ab4f8" d="M685.2 469.4L685.3 471.2L687.9 471.9L691.3 473.3L692.1 474L692.4 473.7L692.7 473.8L693.2 473.4L694.8 473.4L695.5 473.1L696.3 473.1L698.7 471.8L699.5 471.7L700.1 471.2L700.5 471.2L701.2 470.5L700.1 469L699.7 469.2L699.5 469.1L699.3 469.3L698.9 469.2L698.7 469.5L698 469.4L695.3 467.7L691.4 465.8L688.6 464.1L688 464.1L687.5 463.8L687 463.9L686.5 463.6L685.9 463.7L685.6 465.1L684.9 465.2L683.1 467.5L684.9 469.3Z"/>
<path fill="#1967d2" d="M686.3 462.1L685.9 463.9L686.5 463.8L687 464.1L687.5 464.1L688 464.4L688.5 464.3L691.3 466L695.2 468L698 469.7L698.8 469.7L699 469.5L699.3 469.6L699.5 469.3L699.8 469.5L700.1 469.2L699.8 468.9L700 468.6L699.7 468.4L699.8 468.1L699.5 467.9L699.4 467.1L699.1 466.8L699.2 466.4L698.9 466L699 465.6L697.9 464.9L697.3 464.2L694.5 462.4L691.3 460.9L687.8 460.1L686.7 461.3Z"/>
<path fill="#8ab4f8" d="M698.7 466L699 466.4L698.9 466.8L699.2 467.2L699.1 467.7L699.6 468.2L699.4 468.5L699.7 468.7L699.5 469L700.7 470L700.7 470.3L701.4 470.7L703.3 470.9L705.7 470.6L705.7 470.2L705.9 470.1L705.8 469.8L706.1 469.7L706 469.4L706.3 469.2L706.2 469L706.5 468.8L706.4 468.5L708.4 467L709.2 466L708.7 465.2L705.7 464.4L705.2 463.5L702.8 463.7L702 464.2L701.2 464.3L700 465L699.7 465L699.5 465.3L699.2 465.2L699.1 465.5L698.8 465.4ZM706.5 468L706.4 468L706.5 468Z"/>
<path fill="#4285f4" d="M731.2 487.2L731.4 489.5L732.8 492.1L733.6 495.6L735.1 496.6L736.1 494L736.6 493.7L736.8 493.9L737 493.7L737.1 492L737.4 491.2L737.8 491.1L737.9 490.7L738.2 490.6L738.3 490.3L738.6 490.2L738.8 489.7L738.7 489.2L738.3 489L735.1 483.9L732.5 483.7L732.5 484.1L732.2 484.4L732.3 485.4L731.2 485.9L731.1 486.3L730.8 486.4Z"/>
<path fill="#174ea6" d="M728.7 483.1L729.3 484.1L729.1 484.8L729.2 485.3L729.7 485.7L729.7 485.9L729.5 486.4L729.7 486.8L731 486.9L731.6 486.6L731.6 486.3L732.8 485.7L732.7 484.6L733 484.1L732.9 483.7L732.5 483.1L732.3 481.9L732 481.7L730.9 481.9L728.9 482.7Z"/>
<path fill="#1967d2" d="M737.2 491.1L736.9 492L736.9 493.3L736.7 493.8L738.9 498.3L739.3 503.5L741.2 504.5L741.3 504.3L740.5 501.8L741.3 499.3L742.3 499.3L742.5 498.9L742.9 498.6L743.4 498.6L743.9 498.3L744.4 498.4L744.8 498.1L745.2 498.1L745.3 497.6L743.7 493.5L741.4 490.1L741 490.1L740.7 489.8L740.2 489.9L739.7 489.7L739.2 489.8L738.5 489.6L738.4 490L738.1 490.1L738 490.5L737.7 490.6L737.6 490.9Z"/>
<path fill="#1967d2" d="M741 489.9L740.7 489.9L740.8 490.3L741.3 490.3L743.5 493.6L744.4 495.9L744.8 497.1L745.3 498.1L745.8 498.2L746.1 498.6L746.5 498.6L747 499.3L747.4 500.1L747.1 501.4L747.1 502.6L746.8 503.1L747.4 503.6L750.1 501.7L749.2 498.2L746.6 492.9L745.8 490.5L746.1 489.7L742.4 488.7L741.4 489.2L741.3 489.6L741 489.6Z"/>
<path fill="#1967d2" d="M742.9 499.3L743.7 502.2L746.4 502.8L746.9 503.2L747.1 503.1L747.6 500.1L747.2 499.2L746.6 498.5L746.2 498.4L746 498L745.5 497.9L745.2 497.6L745 497.9L744.6 497.9L744.4 498.1L743.9 498.1L743.4 498.4L742.8 498.3L742.3 498.7L742.2 499.2Z"/>
<path fill="#dadada" d="M761.1 467.2L761.3 467.4L761.6 467.4L764 466.4L763.4 463.2L760.5 463.6L760.2 463.8Z"/>
<path fill="#4285f4" d="M763.7 472.4L763.8 472.6L764.2 472.7L765.9 472.3L766.2 471.8L765.7 468.6L763.7 468L763.4 468.1L763.2 468.4Z"/>
<path fill="#1967d2" d="M777 460.4L777.8 458.7L775.9 458.2L774.9 461.4L775.8 468.3L773.6 471L775.4 472L777.8 470.1L777.4 467.5L776.5 464Z"/>
<path fill="#1967d2" d="M769 475.6L769.5 475.7L772.8 473.8L772.3 472.2L772.1 472L771.8 472L768.3 473.8L768.1 474L768.1 474.3Z"/>
<path fill="#8ab4f8" d="M762 496L762.4 496.3L762.8 496L762.8 495.5L763.4 495.7L763 496.8L762.4 496.4L762.2 496.5L762.1 497.4L762.3 497.7L763.8 498.1L764 497.9L764.4 495L762.4 494.4L762.1 494.4L761.9 494.8Z"/>
<path fill="#aecbfa" d="M666.5 475.8L666.8 475.9L666.9 476.2L667.2 476.3L667.5 477.3L667.9 477.6L668 478L668.4 478.2L668.4 478.6L668.9 478.7L669.5 478.5L670.1 478.2L670 477.8L670.2 477.7L670.2 477.3L670.4 477.2L670.6 476.7L671 476.4L671.1 476L671.5 475.7L671.4 474.8L671.6 473.6L671.9 473.5L671.8 473.2L672.1 473L672 472.7L672.3 472.7L672.3 472.5L670.9 472.2L667.4 472.6L667.5 473.8L666.2 475.8L666.3 476Z"/>
<path fill="#4285f4" d="M669.7 477.8L669.8 478.3L670 478.2L670.4 478.5L672.4 479.3L673.5 480.1L678.4 482.4L678.8 482.2L678.3 481.3L679.1 479.5L680.1 478.6L677.8 475.4L675.8 471.5L675.1 471.2L673 472.3L671.7 472.6L671.8 472.9L671.5 473.1L671.6 473.3L671.3 473.6L671.2 474.8L671.3 475.6L671 475.8L670.8 476.3L670.4 476.5L670.3 477L670 477.2L670 477.6Z"/>
<path fill="#1967d2" d="M668.2 480.1L666.6 481.3L667.2 481.8L668.3 484L671.4 487.9L671.4 488.8L675.2 492.6L676.3 496.3L676.5 496.3L676.4 496L676.7 496.2L677.1 496.1L677.5 496.3L677.9 496.2L678.3 496.5L678.7 496.4L679.1 496.6L680.2 496.6L684.9 495.2L686.2 494.9L686.6 495L686.7 494.8L686.9 494.7L686.9 494.4L687.3 494.2L687.7 493.8L689.1 490.6L689 490.2L688.6 490L688.3 490.6L683.2 489.1L680.9 486.1L678.7 482.1L678.4 482.2L673.6 479.9L672.5 479L670.5 478.3L670 478L668.8 478.5L668.8 479L668.5 479.1L668.5 479.5L668.2 479.8Z"/>
<path fill="#1967d2" d="M676.3 495.7L676.1 495.9L677.6 500.6L680.9 500.2L685.7 498.3L686.2 496L687.1 496.1L687.2 495.8L686.7 494.9L686.2 494.7L680.1 496.4L679.1 496.4L678.7 496.1L678.3 496.2L677.9 496L677.5 496.1L677.1 495.9L676.7 496Z"/>
<path fill="#4285f4" d="M686.7 494.5L686.4 494.7L687 495.7L687 496L689 496.4L691.8 493.6L693.2 490.6L692.8 490.4L692.7 490.7L690.7 492.1L689.9 490.5L689.6 490.7L689.4 490.4L689.2 490.6L689 490.4L688.5 491.1L688.2 492.3L687.5 493.6L687.1 494.1L686.7 494.2Z"/>
<path fill="#1967d2" d="M688.3 490.3L689 491.2L689.7 491.3L690.5 492.6L693.5 490.8L693.5 490.5L693 490.1L692.5 488.7L692.1 488.5L689.1 488.8L688.8 489L688.3 490Z"/>
<path fill="#8ab4f8" d="M665.8 481L666.6 481.7L667 481.7L668.5 480.5L669.3 479L669.1 478.2L668.5 477.7L667.5 475.9L667 475.4L666 475.7L665.1 477Z"/>
<path fill="#1967d2" d="M626.7 476.5L626.4 475.4L623.6 475.2L620.6 476.3L618.2 479.4L618.2 481.9L618.6 481.9L618.7 482.2L619.7 482L619.8 482.3L620.1 482.2L620.3 482.5L620.8 482.4L625.4 479.5L626.2 478.3L626.4 477.5Z"/>
<path fill="#1967d2" d="M619.1 485L622.2 488L628.9 492.2L631.4 493.5L632.5 494.1L632.8 494.5L634.3 493.8L639.2 490.2L639.7 490L640.1 489.7L640.5 489.7L640.5 489.5L640.5 488.9L640 488.6L639 487.2L638.7 485.9L638.4 481.6L638.5 480.5L638.3 480L638 480L637.9 479.6L637.5 479.4L637.2 478.3L636.6 477.3L636.6 474.2L636.3 473.4L631.1 474L627.4 475.5L626.3 475.5L626.2 475.9L626.4 476.6L626 478.2L625.5 478.7L625.3 479.1L620.3 482.4L620.3 482.8L619.6 484.1L619.1 484.6Z"/>
<path fill="#1967d2" d="M636.8 473.3L636.2 473.5L636.3 474.2L636.3 477.2L636.9 478.3L637.3 479.5L637.7 479.8L637.8 480.2L638.4 480.1L638.6 479.7L639.7 479.5L640.1 479.1L639.9 478.9L639.2 476.4L638.8 473.5Z"/>
<path fill="#aecbfa" d="M638.1 480L638.4 486L638.8 487.3L639.9 488.8L640.3 489L640.4 489.3L643 489.8L644.1 490.6L644.3 490.3L644.6 490.4L644.8 490.2L646.9 490.8L650.4 491.5L653.1 492.8L655 493.4L655.4 493L655.5 492.3L655.9 492.3L656 491.9L656.3 491.9L656.4 491.6L656.8 491.5L656.9 490.9L656.6 490.9L656.7 490.6L656.4 490.4L655.6 480.4L650.8 478.9L647.6 480L643.2 478.9L640 478.9L639.6 479.2L638.5 479.5Z"/>
<path fill="#1967d2" d="M655.6 480.4L655.8 485.9L656.2 489.9L656.1 490.4L656.4 490.7L656.4 491L656.7 491.1L656.6 491.4L656.8 491.4L656.9 491.2L666.9 491.2L666.2 490.1L664.8 483.9L663.6 481L661.3 480.4L656.4 480.7Z"/>
<path fill="#dadada" d="M614 498.5L614.2 498.8L615.3 499.4L615.6 499.1L620.3 499.1L621.2 498.9L621.1 498.6L621.4 498.5L621.4 498.2L621.7 498.1L621.6 497.8L621.9 497.7L621.9 497.4L622.2 497.3L621.8 488.8L621.6 488.5L622 488.6L621.8 488.2L622.2 488.3L621.9 487.9L622.3 488.1L622.4 487.9L619.3 484.9L617.5 485.7L616.7 486.5L615.9 486.9L613.5 489.2L612.9 490.1L611.2 493.4L611.2 496.3L610.4 497.9L610.7 497.8L611.1 498.1L611.8 498.1Z"/>
<path fill="#1967d2" d="M611.1 490.7L611.9 491.9L612.2 491.8L613.1 490.2L615.1 487.9L617.6 485.9L619.3 485.1L619.3 484.6L619.8 484.2L620.6 482.9L620.5 482.6L620.8 482.4L620.7 482.2L620.4 482.2L620.3 482L620 482L619.7 481.7L618.8 481.9L618.7 481.6L617.8 482L613 486.9Z"/>
<path fill="#1967d2" d="M621.4 497.9L621.1 498L621.2 498.3L620.9 498.4L621 499.1L621.4 499.2L621.5 499.5L622.3 499.9L622.7 500.3L623 500.1L626.7 500.4L628.4 500L630.1 499.9L630.6 499.8L630.9 499.9L631.1 499.8L631.3 500L631.6 499.8L631.8 500.1L632 499.9L632.2 500.2L632.6 499.7L632.4 499.5L632.6 499.2L632.5 498.9L632.7 498.6L632.6 498.3L633.3 497L633.4 496.3L633.3 495.2L633 494.6L633.1 494.3L625 489.6L622.3 487.8L621.6 487.6L621.5 487.7L621.7 488L621.4 488L621.5 488.3L621.3 488.5L621.5 488.8L622 497.1L621.7 497.2L621.7 497.5L621.4 497.6Z"/>
<path fill="#4285f4" d="M632.3 499.7L632.1 500L632.2 500.1L632.4 500L633 500.4L633.6 500.4L633.9 500.6L634.4 500.6L634.8 500.9L635.3 500.9L635.6 501.2L636.7 501.3L642.1 501.4L642.4 501.1L642.9 501.2L643.2 500.9L643.2 500.4L643.4 500.1L643.4 499.7L643.6 499.4L643.7 498.9L644.1 498.5L644.6 493.3L644.1 491.5L644.2 490.8L643.8 490L642.9 489.5L642.2 489.5L641.3 489.1L640.5 489.1L640.3 489.5L639 490L634.2 493.6L632.9 494.2L632.8 494.7L633 495.2L633.1 496.3L633 497L632.7 497.3L632.7 497.8L632.4 498.1L632.4 498.6L632.2 498.9L632.3 499.2L632.1 499.5Z"/>
<path fill="#dadada" d="M642.9 500.4L643.6 502L644 504.1L644.5 505.3L644.6 506.6L646 508.6L646.3 508.4L646.6 508.6L648.1 508.1L649.4 507.2L651.9 506.3L652.9 505.7L653.9 505.4L654.6 504.9L655.1 505L655.5 504.2L655.2 503.9L655.2 503.3L654.8 502.8L654.8 502.2L654.4 501.7L654.2 499.1L654.8 493.1L650.5 491.3L647 490.6L644.9 489.9L644.5 490.2L644.2 490L644 490.3L643.8 490.2L643.9 491.5L644.2 492.1L644.1 492.8L644.4 493.3L643.8 498.4L643.5 498.8L643.4 499.3L643.2 499.6L643.2 500Z"/>
<path fill="#aecbfa" d="M655 503.4L655.2 504.4L655.7 504.6L656.1 504.5L657.2 504.6L658.4 504.4L659.6 504.5L660.7 504.2L663.5 504.4L665.2 504.2L666.3 504.4L666.8 504.1L668.8 501.5L669 500.8L669.4 500.7L668.9 499.7L669.3 498.3L669.7 498.1L669.9 497.6L669.3 495.3L667.8 492.5L666.9 491.1L656.8 491L656.6 491.4L656.3 491.4L656.2 491.7L655.8 491.7L655.7 492.1L655.4 492.1L655 493.1L654.6 493.2L653.9 499.1L654.2 501.8Z"/>
<path fill="#8ab4f8" d="M666.4 504.5L666.6 504.7L666.5 505.2L667.1 506.3L667.6 508.6L667.4 509.1L667.6 509.5L667.4 509.8L667.7 510.1L667.6 510.4L668.4 511L670.1 511.4L670.6 511.7L671.9 511.9L672.5 512.3L674.8 512.9L675.3 513.3L677.9 511.8L679.5 510.6L680.8 509.5L682.6 507.4L682.4 506.6L682.1 506.4L682.1 506.1L681.8 506L681.8 505.7L681.5 505.6L681.5 505.2L681.2 505.1L681.2 504.8L680.9 504.6L678.1 505.1L675.8 503.3L675.6 502.1L674.4 502L672.9 500.9L671.2 501L670.9 500.8L670.4 500.9L670.1 500.6L669.6 500.7L669.2 500.5L668.9 500.6L668.2 501.9L666.4 504Z"/>
<path fill="#8ab4f8" d="M675.2 513.7L675.2 514.1L674.9 514.4L674.6 515.5L674.8 515.9L674.7 516.3L675.1 517.5L681 513.3L684.3 509.1L685.3 504.2L683.7 503.5L681.1 504.5L681 505.3L681.3 505.4L681.3 505.7L681.6 505.8L681.6 506.2L681.9 506.3L681.9 506.6L682.2 506.7L682.1 507L682.4 507.4L680.6 509.4L677.8 511.6L676.3 512.3L675.3 513.1L675.4 513.5Z"/>
<path fill="#aecbfa" d="M655.3 504.7L655.2 505L655.4 505.2L655.3 505.6L657.1 508.5L657 508.8L657.3 509L657.1 509.3L657.3 509.4L657.1 509.7L657.3 509.8L657.2 510.1L658.4 510.7L661.4 511.4L662.3 511.7L662.4 512L662.8 512.2L664.4 512.2L666.5 511.9L666.9 511.3L667.5 511L667.9 510.1L667.7 509.8L667.8 509.5L667.6 509.1L667.9 508.6L667.3 506.3L666.7 505.1L666.9 504.7L666.7 504.4L666.8 504.2L666.7 504L666.3 504.2L665.2 504L663.5 504.2L660.7 504L659.6 504.2L658.4 504.1L657.2 504.4L656.1 504.2L655.7 504.4L655.4 504.2L655.1 504.6Z"/>
<path fill="#aecbfa" d="M645.1 511.5L645.1 511.8L645.3 511.9L646.3 511.9L647.1 512.3L647.6 512.2L648.2 512.4L653.4 511.5L655.7 510.9L656.3 510.5L656.8 510.5L657.2 510.2L657.6 510.3L657.5 510L657.7 509.7L657.4 509.6L657.6 509.3L657.4 509.2L657.6 508.9L657.3 508.7L657.3 508.2L655.6 505.5L655.7 505.2L655.4 504.9L655.6 504.7L655.2 504.5L655 504.7L654.5 504.7L653.8 505.2L652.7 505.5L651.9 506.1L649.3 507L648 507.8L646.6 508.4L646.3 508.2L645.9 508.4L645.5 508.7L645.4 509.1L645 509.4L644.8 510.3L644.8 511.2Z"/>
<path fill="#1967d2" d="M668.9 500.3L669.5 500.9L670 500.9L670.3 501.1L670.8 501L671.2 501.2L672.9 501.1L673.3 501.6L674.9 502.4L675.2 502.3L675.4 502.5L675.7 502.2L675.3 500.4L672.5 498.1L670.4 498.7L670.2 498.6L669.9 497.6L669.6 497.5L669.5 497.9L669 498.1L668.8 498.9L668.7 499.7L668.9 500.1Z"/>
<path fill="#1967d2" d="M631.6 501.7L631.6 502.5L631.7 502.9L632 503.1L632.1 503.8L632 507.1L633.1 509.9L634.8 510L637.6 511L639.2 510.6L639.3 510.4L639 510.3L643 506.6L643.3 506.8L643.6 506.6L643.8 506.8L644.1 506.6L644.3 506.8L644.5 506.5L644.8 506.7L645 506.4L643.8 502L643.1 500.7L642.8 501L642.3 500.9L642 501.2L636.7 501.1L635.7 500.9L635.4 500.7L634.9 500.7L634.5 500.4L634 500.4L633.7 500.1L633.1 500.2L632.6 499.9L632.4 499.9L632.4 500.3L632.1 500.4L632.1 500.7L631.8 501L631.9 501.3Z"/>
<path fill="#1967d2" d="M639.4 510.6L640.3 513.2L640 514.3L642.7 514L642.8 513.6L643.2 513.5L643.3 513.2L644.5 512.6L644.6 512.3L644.9 512.3L645 511.9L645.3 511.9L645.4 511.4L645.1 511.1L645.1 510.4L645.3 509.5L645.6 509.3L645.7 508.8L646.1 508.4L645.3 507L644.6 506.2L644.3 506.4L644.1 506.3L643.8 506.5L643.6 506.3L643.3 506.5L643 506.3L638.8 510.3L638.8 510.7Z"/>
<path fill="#1967d2" d="M610.5 497.6L609.8 499.1L610.2 501L610.8 502.1L611.3 502.1L611.7 501.7L615 501.2L615.1 501L615.4 501.1L615.2 500.2L615.3 499.5L614.8 498.8L614.4 498.6L614.1 498.3L611.8 497.8L611.1 497.9L610.8 497.5Z"/>
<path fill="#aecbfa" d="M611.6 501.5L610.8 502.1L612.1 504.3L613.7 505.9L614.1 506L614.3 505.7L614.6 505.9L614.8 505.6L617.7 506.6L618.6 506.5L618.7 506.3L619.1 506.3L619.6 505.1L620 504.9L620.2 504.3L620.2 504L619.9 504L619.9 503.7L619.6 503.7L619.5 503.4L619.1 503.4L617 501.8L616.7 501.8L616.6 501.5L616.3 501.5L616.2 501.2L615.8 501.2L615.7 500.9Z"/>
<path fill="#1967d2" d="M615 500L615.2 501.1L615.5 501.1L615.7 501.4L616 501.4L616.1 501.8L616.4 501.8L616.6 502L616.9 502.1L619 503.6L619.3 503.6L619.4 503.9L619.7 503.9L619.7 504.2L620 504.3L620 504.6L622.4 504.3L622.4 504L622.7 503.9L622.7 503.6L623 503.4L623 503.1L623.2 502.8L623.1 501.5L622.6 500.7L622.7 500L622.1 499.5L621.7 499.4L621.6 499L621.2 499L621.1 498.7L620.2 498.9L618.9 498.8L617.7 499L615.6 498.9L615.3 499.2L614.9 499.2L615 499.6Z"/>
<path fill="#1967d2" d="M619 505.9L619 506.5L619.3 507.1L619.2 508.7L619.7 509.5L619.8 510L621.2 510.3L625 510L624.8 505.8L624.4 504.8L623.4 504.8L623 504.4L622.6 504.5L622.4 504.1L620.1 504.3L619.8 504.7L619.4 505Z"/>
<path fill="#1967d2" d="M624.6 505.9L624.8 510L625.4 510.1L625.6 510.3L628.9 510.2L628.6 504.6L624.8 504.4L624.2 504.9L624.2 505.3Z"/>
<path fill="#1967d2" d="M622.2 504.1L621.9 504.2L621.9 504.4L622.3 504.4L622.4 504.7L622.9 504.7L623.4 505L624.4 505L624.8 504.9L624.9 504.6L628.5 504.8L628.6 504.4L629.1 504.1L630.8 503.7L631 503.3L631.4 503.2L631.3 502.9L631.6 502.9L631.6 502.6L632 502.5L631.8 501.7L632.1 501.4L632.1 501L632.4 500.9L632.4 500.5L632.7 500.4L632.5 499.7L632.2 499.8L632 499.6L631.8 499.7L631.6 499.5L631.3 499.7L631.1 499.5L630.9 499.7L630.5 499.5L630.1 499.7L628.4 499.8L626.1 500.2L624.9 499.9L622.9 499.8L622.5 500.2L622.4 500.6L622.8 501.6L623 502.7L622.8 502.9L622.8 503.3L622.4 503.4L622.5 503.7L622.2 503.8Z"/>
<path fill="#8ab4f8" d="M630.7 503.5L629.1 503.8L628.3 504.3L628.6 509.9L628.9 510.2L632 509.8L633.1 509.9L633.3 509.6L632.2 507.1L632.4 505.3L632.3 503.8L632.3 503L632 502.8L632 502.4L631.4 502.4L631.4 502.7L631.1 502.7L631.1 503.1L630.8 503.2Z"/>
<path fill="#aecbfa" d="M613.4 505.7L613.5 506.1L616.4 509.4L619.7 510.2L620.2 510L620.2 509.4L619.6 508.2L619.7 506.8L619.1 505.9L618.5 505.8L617.8 506.1L615 505.2L613.6 505.3Z"/>
<path fill="#4285f4" d="M641.9 513.8L640.1 514.1L639.3 516.3L638.9 516.5L638.9 517.5L639.2 517.7L639.5 519L641.1 519.3L641.4 519.5L642.3 519.5L643 519.2L643.3 518.9L643.2 518.4L643.4 518.1L643.6 517L643.3 516.6L643.4 516.1L643.1 515.7L643.2 515.1L643 514.8L643 514.3L642.7 514.2L642.7 513.9Z"/>
<path fill="#dadada" d="M642.5 514L642.5 514.3L642.8 514.5L642.7 514.8L643 515.2L642.9 515.7L643.2 516.1L643.1 516.7L643.3 517L643.2 518L642.9 518.4L643 518.8L642.8 519.1L643.5 519.5L643.2 521.7L643.3 522.8L643.5 522.9L646 522.5L646.5 522.3L646.3 522L646.6 521.9L646.3 521.6L646.6 521.5L646.3 521.3L646.6 521.2L646.4 520.9L646.7 520.8L648.1 517L647.2 513.2L646.9 513.1L647.1 512.9L646.7 512.8L647.1 512.5L646.6 512.4L647.1 512.2L646.6 512.1L646.6 511.9L646.3 511.7L644.8 511.7L644.7 512.1L644.4 512.1L644.3 512.4L643.1 513L643 513.3L642.7 513.4L642.6 513.7L642.2 513.8L642.2 514Z"/>
<path fill="#8ab4f8" d="M646.1 521.8L645.8 521.9L646 522.2L645.7 522.4L646 522.5L646.7 522.4L648.5 523.1L651.4 523.9L651.6 524.2L651.9 524.4L652.6 527L653.1 527.5L653.3 528.2L653.8 528.7L653.9 529.2L655.6 529.4L656.5 529.2L659.8 529.7L660 529.6L660.3 529.3L660.2 528.9L660.5 528.2L660.3 527.5L660.7 526.1L661.1 525.9L661.2 525.5L661.3 523.4L662 519.8L662.2 518.9L662.6 518.8L662.7 518.3L663.2 518L662.9 517.6L663 517L662.5 512.9L663 512L662.6 511.8L662.3 511.5L660.3 511L659.5 510.6L658.5 510.5L657.2 510L656.7 510.3L656.1 510.3L655.7 510.7L653.4 511.3L648.2 512.1L647.7 511.9L646.3 511.9L646 512.2L646.4 512.3L646.2 512.5L646.5 512.6L646.3 512.9L646.6 513L646.6 513.3L646.9 513.3L647.9 517L646.5 520.6L646.2 520.7L646.2 521L646 521.1L646.1 521.4L645.8 521.6Z"/>
<path fill="#1967d2" d="M662.5 512.5L662.3 512.9L662.8 517L662.7 517.6L662.9 518.1L664 518.1L665.4 517.6L666 517.5L666.6 517.7L667.6 517.4L667.6 516.3L667.2 515.2L667.1 513.1L666.8 512.6L666.8 512.2L666.5 512.1L666.5 511.8L664.4 512L663 511.9L662.5 512.2Z"/>
<path fill="#174ea6" d="M666.6 512.4L666.9 513.3L666.9 515.3L667.4 516.4L667.2 517L667.3 517.2L667.1 517.5L667.6 517.8L668.1 518.5L670.4 519.8L671.1 520.7L672.2 521.7L672.6 521.8L674.4 518L675.2 517.4L675.2 516.7L675 516.4L675.1 515.9L674.8 515.5L675.1 514.5L675.5 514.1L675.6 513.4L674.9 512.7L674.1 512.6L672 511.6L670.7 511.5L669 510.8L668.5 510.8L668 510.4L667.5 510.5L666.4 511.6L666.2 512.2Z"/>
<path fill="#1967d2" d="M662 518.8L661 523.4L661 525.6L661.6 525.6L662 526L663.6 526.7L664.6 527.7L664.6 528L665 528.3L665.1 528.7L665.4 528.8L665.6 529.2L665.9 529.3L666 529.7L666.3 529.8L666.4 530.3L666.7 530.4L667 530.1L667.3 530.2L667.5 529.9L667.9 530.1L669.1 529.8L672.3 528.6L671.8 527.3L672.1 523.6L672.7 521.6L672.4 521.5L671.2 520.5L670.6 519.6L668.2 518.3L667.7 517.6L667.2 517.4L666.6 517.5L665.9 517.3L664 517.9L663.4 517.8L663 517.9Z"/>
<path fill="#4285f4" d="M642.3 535.4L642.7 536.2L650.8 536.2L651.5 536.5L651.8 536.5L652.1 536.8L653.3 536.4L653.6 535.9L653.3 535.7L653.5 535.4L653.2 535.2L653.4 534.9L653.1 534.7L653.3 534.4L653.1 534.1L653 531.1L653.1 530.3L653.5 530.1L653.4 529.8L653.8 529.7L653.8 529.3L654.1 529.2L654.1 529L653.9 528.5L653.5 528.1L653.3 527.4L652.8 526.8L652.1 524.3L651.7 524L651.6 523.7L648.6 522.9L646.7 522.2L643.4 522.7L643.6 524.5L643.6 529.1L642.2 532Z"/>
<path fill="#1967d2" d="M653 534.4L652.9 534.8L653.1 535L652.9 535.3L653.2 535.5L653 535.7L653.3 535.9L653.2 536.3L653.6 536.1L653.9 536.4L655.3 536.4L657 537.2L657.5 536.4L660.6 535.6L662.2 534.6L662.6 534.6L662.8 534.4L663.1 534.5L663.4 534.3L663.6 534.5L663.9 534.3L664.1 534.5L664.3 534.3L664.6 534.5L664.8 533.9L664.5 533.8L664.5 533.5L664.2 533.5L664.2 533.2L663.9 533.2L663.9 532.9L663.6 532.9L663.5 532.6L663.2 532.7L663 532.4L662.7 532.4L662.4 532.1L661.8 532.1L661.6 531.8L661.4 531.1L661 530.7L660.9 530.2L660.5 530L660.3 529.6L658.9 529.2L657.5 529.2L656.6 529L655.6 529.2L654.9 529.1L654.6 529.2L654.2 528.9L653.5 529.2L653.5 529.5L653.2 529.7L653.2 530L652.9 530.3L652.8 532.8Z"/>
<path fill="#1967d2" d="M660.1 528.7L660.2 530.1L660.6 530.3L660.7 530.8L661.2 531.3L661.3 531.9L661.7 532.2L662.3 532.4L662.6 532.6L662.9 532.6L663 532.9L663.3 532.9L663.4 533.2L663.7 533.2L663.7 533.5L664 533.4L664 533.8L664.3 533.8L664.2 534.1L665.6 533.8L665.7 533.3L666.1 533L666.6 531.5L666.5 529.7L666.1 529.5L666.1 529.2L665.7 529L665.7 528.7L665.3 528.5L665.3 528.1L664.9 527.9L664.8 527.6L664.3 527L663.7 526.5L662.1 525.8L661.6 525.4L661 525.4L660.9 525.8L660.4 526L660.1 527.4L660.2 528.2Z"/>
<path fill="#1967d2" d="M662.5 542.1L662.2 542.3L662.4 543.1L662.8 543.6L663.4 545.3L663.8 545.6L663.7 545.9L663.9 546L664.5 544.3L666 542.4L667.8 538.7L670.6 536.8L673 534L673 530.2L672.2 528.4L669 529.6L667.9 529.8L667.6 529.7L667.2 529.9L666.9 529.8L666.7 530.1L666.3 530.1L666.4 531.4L665.9 532.9L665.5 533.1L665.4 533.6L664.6 534.6L664.8 534.9L664.6 535.2L664.8 535.5L664.6 535.7L664.8 536L664.6 536.3L664.8 536.6L664.6 536.9L664.8 537.2L664.7 537.4L664.8 537.9L663.2 541.1L662.9 541.3L662.8 541.7L662.5 541.8Z"/>
<path fill="#1967d2" d="M660.5 535.4L657.3 536.2L657.2 536.6L656.9 536.7L656.9 537.1L657.5 537.9L657.8 538.7L658.4 539.3L659.1 541L659 541.3L659.2 541.5L659.1 541.8L659.6 542L661.2 542L661.5 542.3L662.1 542.4L662.5 542.7L662.5 542.4L662.8 542.3L662.8 542L663.1 541.9L663 541.5L663.4 541.2L665.1 537.9L664.9 537.5L665.1 537.1L664.9 536.9L665.1 536.6L664.9 536.3L665.1 536L664.9 535.7L665.1 535.5L664.9 535.2L665.1 534.8L664.3 533.9L664.1 534.2L663.8 534L663.6 534.2L663.4 534L663.1 534.3L662.8 534.1L662.5 534.4L662 534.3Z"/>
<path fill="#4285f4" d="M650.4 542.8L651.2 538.5L651.5 537.7L651.8 537.6L652 537.2L652.3 537.1L652.2 536.8L652.5 536.7L652.4 536.4L652.1 536.5L652 536.3L650.8 536L649.8 536.1L648.9 535.9L642.6 536L643.6 541.5L645 546.2L647.5 550L649.2 548.5L650.9 545.9L650.8 544.3L650.6 543.8L650.7 543.3Z"/>
<path fill="#4285f4" d="M650.4 543.3L650.5 545L650.8 545.7L651.1 545.5L651.4 545.8L651.5 545.5L651.8 545.8L652 545.6L652.2 545.8L656.6 544.7L657.5 544L657.7 543.5L658.3 543.2L658.5 542.7L659.1 542.4L659.3 542L659.5 541.9L659.5 541.4L659.2 541.3L659.3 540.9L658.6 539.1L658 538.5L657.7 537.8L657 537L655.4 536.2L654.9 536.3L654.4 536L654 536.1L653.6 535.9L653 536.4L652 536.7L652 537L651.7 537.1L651.7 537.4L651.3 537.6L651 538.4L650.2 542.8Z"/>
<path fill="#1967d2" d="M649 548.4L648.3 548.8L647.4 549.8L647.9 550.9L648.3 553.7L649.4 556.8L652.7 555.7L656.5 554.7L660.3 551.9L662.7 549L664 545.5L663.6 545.2L663 543.5L662.6 543.1L662.5 542.5L662.2 542.2L661.7 542.1L661.2 541.8L659.3 541.7L658.9 542.3L658.4 542.5L658.1 543.1L657.6 543.3L657.3 543.9L656.5 544.5L652.2 545.5L652 545.3L651.8 545.4L651.6 545.2L651.3 545.4L651.2 545.2L650.8 545.3L650.6 545.8ZM658 550.5L659.4 550.1L659.7 551.3L658.4 551.8Z"/>
<path fill="#fff" d="M658 552.1L658.2 552.3L658.5 552.3L660.2 551.5L659.6 549.6L657.5 550.2Z"/>
<path fill="#dadada" d="M678.2 536.5L676.6 541.4L677.4 545.6L677.6 545.7L680.4 544.7L682.5 539.8L684.2 532.3L681.6 531.5Z"/>
<path fill="#1967d2" d="M524.6 494.9L521.8 496.6L525 498.1L524.8 498.2L524.9 498.4L525.4 498.3L526.1 498.6L529.2 500.6L531.9 502.9L534.3 503.1L533.5 501L530.4 498.8L529.4 495.5L526.6 495.1L526.7 494.9L526.6 494.8L526.1 495.1Z"/>
<path fill="#1967d2" d="M543.2 505L542.4 509.8L541.1 514.3L540.4 514.9L541.2 515.2L541.8 515.1L542.3 515.3L542.6 515.8L543.1 516L543.3 516.4L543.8 516.7L544 517.1L544.5 517.3L544.7 517.7L545.4 517.6L546.2 517.8L546.9 517.7L548.1 518.1L548.5 518.5L548.9 518.4L548.9 518.7L549.1 518.7L549.1 518.3L549.5 518.1L549.6 517.6L550 517.1L550.1 516.6L550.5 516.1L550.5 515.6L551.1 515.1L551.8 514.8L551.9 514.3L552.2 514.2L552.2 513.8L552.5 513.6L552.1 513.3L552.1 512.7L551.6 512.3L551.6 511.7L551.1 511.1L550.9 510L550.5 509L549.3 507.5L547.6 504.1L546.5 503.7Z"/>
<path fill="#1967d2" d="M547.5 504.1L549.1 507.6L550.3 509.1L550.7 510L550.9 511.2L551.3 511.8L551.4 512.4L551.8 512.8L551.9 513.4L552.3 513.7L554 513.8L557.2 512.2L558.6 511.8L559.3 511.1L559.6 510.4L559.5 510L559.8 509.6L559.8 509.1L560.2 508.4L559.1 505.7L553.1 503.7L548.5 504.4Z"/>
<path fill="#dadada" d="M559.1 510.8L559.9 511.5L560 511.9L560.4 512.2L560.5 512.8L561 513.2L562 514L563.9 514.7L569.6 514.5L569.7 514.2L570.1 514.2L570.2 513.9L570.5 513.8L570.6 513.5L571 513.4L571.1 513.1L570.3 511.6L564.3 509.6L560.4 509L560.1 508.4L559.9 508.4L559.5 509L559.6 509.5L559.3 510L559.4 510.4Z"/>
<path fill="#1967d2" d="M544.3 518.1L544.6 518L544.6 517.7L544.9 517.6L544.7 517.1L544.2 516.9L544 516.5L543.5 516.3L543.3 515.8L542.8 515.6L542.5 515.1L541.9 514.9L541.2 515L540.7 514.7L540.5 514.8L538.5 516.4L538.5 520.9L538.6 521.1L539 520.9L539.2 521.1L539.6 520.9L539.9 521.1L540.3 520.9L540.7 521L541.9 519.8L542.9 519.3L543.2 519L543.8 518.8L544 518.5L544.3 518.4Z"/>
<path fill="#1967d2" d="M544.1 518.2L541.8 519.6L540.6 520.8L540.3 520.7L539.9 520.8L539.7 520.7L539.3 520.8L538.9 520.7L538.5 520.8L538.5 522.3L541.1 527.6L544.4 532.2L548.4 535.5L551 536.2L551 536.8L551.3 536.9L551.6 536.1L551.8 530.5L550.8 528.5L549.7 527.8L548.8 527.5L548.7 527.1L548.3 526.9L547.6 526L547.1 525.8L546.9 525.2L546.9 523.9L547.3 523.5L547.3 523L548 522.6L548.6 521.8L549.5 521.3L549.6 520.8L549.8 520.6L549.6 520.3L549.6 519.8L549.3 519.5L549.4 519L549.1 518.8L549.1 518.3L548.6 518.2L548.2 517.9L547 517.5L546.2 517.6L545.4 517.3L544.4 517.5L544.4 517.8L544.1 517.9Z"/>
<path fill="#1967d2" d="M547.4 526.1L547.5 526.5L547.9 526.7L548 527.1L548.5 527.2L548.7 527.7L549.6 528L550.6 528.7L550.8 528.7L550.9 528.4L551.2 528.5L551.4 528.2L551.7 528.3L552.1 528L553 528.3L554.3 528.3L555.9 528.7L560.5 533.3L562.9 536.3L563 537L562.7 537.2L562.7 537.6L562.4 537.7L562.4 538.1L562.1 538.3L562.1 538.6L562.5 538.7L562.6 539L562.9 539L563 539.3L563.3 539.2L563.4 539.5L563.6 539.5L566.2 542.8L566.5 543.7L567.1 544.4L567.4 545.3L568 546.1L568.4 547.1L568 547.9L567.5 548.1L567.2 548.7L566.8 548.9L566.9 549.2L566.8 549.6L567 549.9L566.8 550.3L567 550.5L566.9 550.9L567.5 551.9L567.4 552.4L568.7 553.4L569.2 553.6L569.5 554L569.8 553.9L570 554.2L570.2 554L570.3 554.3L570.6 554.2L570.7 554.4L571 554.3L571.1 554.6L574.3 548.1L576.8 544.2L581.5 542.2L584.1 538.8L584.9 533.5L586.8 529.6L588.8 525L586.7 521.5L573.6 517.5L571 513L570.8 513.2L570.5 513.3L570.4 513.6L570 513.6L569.9 514L569.5 514L569.5 514.3L563.9 514.5L562.1 513.8L561.1 513L560.7 512.6L560.6 512.1L560.2 511.8L560.1 511.4L559.8 511.3L559.6 510.9L558.9 511.1L558.5 511.6L557.1 512L553.9 513.6L553 513.6L552.7 513.4L552 513.6L552 514L551.7 514.2L551.6 514.6L550.9 514.9L550.4 515.5L550.2 516.1L549.8 516.5L549.8 517L549.4 517.5L549.3 518L548.9 518.2L548.8 518.8L549.1 519.2L549.1 519.5L549.4 519.9L549.4 520.3L549.5 520.6L549.3 520.7L549.3 521.1L547.1 522.8L547 523.4L546.7 523.9L546.7 525.2L546.9 525.9Z"/>
<path fill="#4285f4" d="M550.8 528.2L550.6 528.7L550.9 529L550.9 529.4L551.3 529.8L551.3 530.2L551.6 530.6L551.3 536.1L551 536.4L551.1 536.6L551 536.8L551.3 537.8L552.5 538.7L553.2 540.1L553.3 540.7L553.5 540.9L553.6 541.2L553.9 541.3L553.9 541.7L554.7 542L556.8 541.9L557.5 542.2L558.3 542L558.6 542.1L558.8 541.9L559 541.9L559.1 541.6L559.4 541.1L559.4 540.6L560 539.6L560.6 539.1L561.3 538.9L562.7 538.2L562.6 537.9L562.9 537.7L562.9 537.3L563.2 537.1L563.1 536.2L560.7 533.2L556 528.5L554.3 528.1L553 528L552.1 527.8L551.7 528L551.2 528L551.1 528.2Z"/>
<path fill="#4285f4" d="M559.6 539.7L559.2 540.4L559.2 541L558.8 541.4L558.8 541.8L559.2 542.1L559.2 542.6L559.8 543.3L562.1 544.9L564.8 548.4L565.3 548.7L565.6 548.6L565.8 548.8L566.1 548.7L566.3 548.9L566.6 548.8L566.9 549.1L567.3 548.9L567.6 548.3L568.2 548L568.6 547.2L568.2 546.1L567.6 545.2L567.3 544.3L566.7 543.6L566.4 542.6L563.5 539.3L563.5 539L563.2 539L563.1 538.7L562.8 538.7L562.7 538.4L562.4 538.5L562.2 538.2L560.4 538.9Z"/>
<path fill="#8ab4f8" d="M566.7 557.3L567.6 557.3L570.2 556.7L571.2 554.5L571.1 554L570.8 554.1L570.7 553.9L570.4 554L570.3 553.7L570 553.8L569.8 553.6L569.6 553.7L568.4 552.8L567.5 552.5L567.2 552.8L566.9 552.8L566 555.5Z"/>
<path fill="#1967d2" d="M554.3 541.6L553.4 542.7L552.4 559.8L553.7 575.5L554.4 578L555.3 582.1L557 583.4L558.4 584.1L558.5 583.5L557.9 580.9L559.8 576.9L559.1 574.3L559.2 569.1L561.1 566.5L561.8 563.9L565.7 562.5L567 559.9L566.5 558.1L566.9 557.2L566.2 555.6L567 553L567.4 553.1L567.5 552.8L567.9 552.7L567.7 552.3L567.7 551.8L567.1 550.8L567.3 550.6L567.1 550.2L567.2 549.8L567 549.5L567.2 549.1L566.8 548.6L566.4 548.7L566.2 548.4L565.9 548.6L565.6 548.3L565.3 548.4L564.7 548.1L564.1 546.9L562.5 545.1L560 543.2L559.4 542.4L559.4 542L558.7 541.6L558.5 541.8L558.2 541.7L557.9 541.9L556.8 541.7L556.1 541.8L555.5 541.6L554.7 541.7Z"/>
<path fill="#1967d2" d="M551.2 537.3L551 537.4L550.3 555.9L550.7 567.7L551.7 577L553.7 583L557 586.3L559.1 586.9L558.4 583.8L557.1 583.2L555.5 581.9L554.6 577.9L553.9 575.5L552.6 559.8L553.7 542.8L554.1 542.4L554.1 542.1L554.4 542L554.4 541.7L554.1 541.5L554.1 541.2L553.8 541.1L553.8 540.7L553.5 540.5L553.5 540L552.7 538.6L552.2 538.3L552 537.9Z"/>
<path fill="#1967d2" d="M785.3 537.6L784.7 537.5L780.5 534.4L779.1 531.7L775 532.3L774.5 534.3L774.2 534.7L773.7 534.8L771.1 534.3L767.1 536.3L763.1 540.2L757.9 542.2L754.5 545.6L753.2 558.9L758 558.9L763.3 556.9L768.6 555.6L773.6 556.9L775.6 558.8L777.6 561.5L779 566.1L784.3 565.5L788.3 564.2L791.6 560.2L794.3 554.9L794.9 549.6L793 544.2L790.3 540.2L789 535L787.6 531L787.5 531.1L785.8 537.1Z"/>
<path fill="#1967d2" d="M781.6 573.4L782 573.6L782.3 573.5L783.3 571.5L783.2 571L780.8 571L780.7 571.5Z"/>
<path fill="#1967d2" d="M812.9 569.3L812.7 571.9L813.2 572L814.9 570.8L816.2 568.2L816.3 567.9L816 567.6L813.1 569Z"/>
<path fill="#1967d2" d="M801.8 580.7L802.3 580.8L808.9 575.5L809.7 573.8L809.4 573.6L809.1 573.6L800.9 578.9L800.8 579.4Z"/>
<path fill="#1967d2" d="M786.2 521.5L785.1 519.2L781.6 519.5L781.3 519.9L783.3 523.4L785.6 525.6L786 525.3L786.5 523.1L787.2 522.8L787.3 522.5L787 521.8L786.5 521.7Z"/>
<path fill="#4285f4" d="M786.8 522L786.9 522.6L787.4 522.7L787.7 523.1L788.2 525.9L790.8 526.6L794.1 528.6L794.3 528.5L793 525.8L790.3 521.8L787.6 521.1L787.3 521.7Z"/>
<path fill="#1967d2" d="M738.1 514L744.7 522L746.8 522.7L746.8 522.5L744.9 519.2L742.2 515.9L738.9 511.9L736.8 510.6L736.7 510.7Z"/>
<path fill="#1967d2" d="M741.8 513L742 513.3L743.3 513.7L743.7 513.6L743.8 513.3L743.8 511.1L741.3 510.3L741.1 510.8Z"/>
<path fill="#1967d2" d="M757.3 514.5L754.6 515.8L751.9 516.5L751.9 518.7L754.6 519.6L758 520L760 516.6L759.3 513.2Z"/>
<path fill="#1967d2" d="M758.3 511.1L758.7 511.5L760.5 511.7L760.9 509.6L758.7 509L758.3 509.1L758.2 509.4Z"/>
<path fill="#4285f4" d="M762 496.8L762.2 497.4L762.6 497.4L763.2 497.9L763.4 497.8L764.2 495.4L762.7 494.5L762.4 494.5L762 495.8Z"/>
<path fill="#4285f4" d="M767.5 506.2L768.3 508.8L768.6 508.8L768.8 508.6L769.5 506.6L767.7 505.7Z"/>
<path fill="#1967d2" d="M762 519.7L762.3 520.2L763.8 520.4L764.2 518.7L762.6 518.2L762.3 518.3Z"/>
<path fill="#1967d2" d="M747.7 524.7L748 525L749.5 525.1L749.7 523.9L748.1 523.5L747.8 523.6Z"/>
<path fill="#1967d2" d="M751.6 525.7L752 526.1L753.8 526.2L754.2 525.9L754.3 525L752.1 524.5L751.8 524.6L751.6 524.9Z"/>
</svg>

<!-- card 2: realtime -->
<div class="card" style="left:1142px;top:246px;width:355px;height:467px"></div>
<svg style="left:1171px;top:385px" width="296" height="60" viewBox="0 0 296 60">
  <line x1="9" y1="54" x2="231" y2="54" stroke="#1a73e8" stroke-width="1.600" stroke-dasharray="7.400 1.900"/>
  <g fill="#1a73e8">
    <rect x="232" y="23" width="8" height="32"/>
    <rect x="241" y="6" width="8.500" height="49"/>
    <rect x="250.500" y="39.500" width="8" height="15.500"/>
    <rect x="260" y="39.500" width="7.500" height="15.500"/>
    <rect x="269" y="6" width="8" height="49"/>
    <rect x="278.500" y="39.500" width="7.500" height="15.500"/>
  </g>
</svg>
<div class="rl" style="left:1171px;top:482px;width:297px;background:#dadce0"></div>
<svg style="left:1451px;top:670px" width="28" height="22" viewBox="1080 670 28 22" fill="none" stroke="#1a73e8" stroke-width="2"><path d="M1084.800 681.100H1101.700M1095.900 675.100 1101.900 681.100 1095.900 687.100"/></svg>

<!-- next row of cards (cropped) -->
<div class="card" style="left:399px;top:775px;width:355px;height:60px"></div>
<div class="card" style="left:770.500px;top:775px;width:355px;height:60px"></div>
<div class="card" style="left:1142px;top:775px;width:355px;height:60px"></div>

<!-- feedback fab -->
<div class="abs" style="left:1545px;top:716px;width:47px;height:47px;border-radius:50%;background:#fff;box-shadow:0 1px 3px rgba(60,64,67,.3),0 4px 8px 3px rgba(60,64,67,.15)"></div>
<svg style="left:1555px;top:725.200px" width="27.500" height="27.500" viewBox="0 0 24 24" fill="#202124"><path d="M20 2H4c-1.100 0-2 .9-2 2v18l4-4h14c1.100 0 2-.9 2-2V4c0-1.100-.9-2-2-2zm0 14H5.170L4 17.170V4h16v12zm-9-4h2v2h-2zm0-6h2v4h-2z"/></svg>

<!-- page scrollbar -->
<div class="abs" style="left:1597px;top:72px;width:3px;height:305px;background:#c1c1c1;border-radius:2px 0 0 2px"></div>

<!-- table rules and bars -->
<div class="rl" style="left:830px;top:392.9px;width:266px"></div>
<div class="bar" style="left:830px;top:390.9px;width:70px"></div>
<div class="rl" style="left:830px;top:430.06px;width:266px"></div>
<div class="bar" style="left:830px;top:428.06px;width:37.5px"></div>
<div class="rl" style="left:830px;top:467.22px;width:266px"></div>
<div class="bar" style="left:830px;top:465.22px;width:15px"></div>
<div class="rl" style="left:830px;top:504.38px;width:266px"></div>
<div class="bar" style="left:830px;top:502.38px;width:11.2px"></div>
<div class="rl" style="left:830px;top:541.54px;width:266px"></div>
<div class="bar" style="left:830px;top:539.54px;width:10.2px"></div>
<div class="rl" style="left:830px;top:578.7px;width:266px"></div>
<div class="bar" style="left:830px;top:576.7px;width:7.5px"></div>
<div class="bar" style="left:830px;top:613.86px;width:6px"></div>
<div class="rl" style="left:1171px;top:515px;width:297px"></div>
<div class="bar" style="left:1171px;top:513px;width:153.6px"></div>
<div class="rl" style="left:1171px;top:548.65px;width:297px"></div>
<div class="bar" style="left:1171px;top:546.65px;width:21.6px"></div>
<div class="rl" style="left:1171px;top:582.3px;width:297px"></div>
<div class="bar" style="left:1171px;top:580.3px;width:10.6px"></div>
<div class="rl" style="left:1171px;top:615.95px;width:297px"></div>
<div class="bar" style="left:1171px;top:613.95px;width:10.6px"></div>
<div class="bar" style="left:1171px;top:647.6px;width:5px"></div>
<!-- text -->
<div id="txt">
<div class="t" style="left:62.22px;top:22px;font-size:25.6px;letter-spacing:-0.14px;color:#5f6368;-webkit-text-stroke:0.15px">Analytics</div>
<div class="t" style="left:495.17px;top:25px;font-size:18.6px;letter-spacing:0.45px;color:#80868b;-webkit-text-stroke:0.25px">Try searching "Data Streams"</div>
<div class="t" style="left:80.05px;top:94px;font-size:15.6px;letter-spacing:0.82px;color:#202124;-webkit-text-stroke:0.45px">Reports snapshot</div>
<div class="t" style="left:79.94px;top:135px;font-size:15.6px;letter-spacing:0.99px;color:#202124;-webkit-text-stroke:0.45px">Real-time</div>
<div class="t" style="left:81.06px;top:190px;font-size:15.6px;letter-spacing:0.91px;color:#5f6368;-webkit-text-stroke:0.45px">App developer</div>
<div class="t" style="left:98.32px;top:231px;font-size:15.6px;letter-spacing:0.68px;color:#202124;-webkit-text-stroke:0.45px">Firebase</div>
<div class="t" style="left:80.37px;top:286px;font-size:15.6px;letter-spacing:1.05px;color:#5f6368;-webkit-text-stroke:0.45px">Games reporting</div>
<div class="t" style="left:99.68px;top:328px;font-size:15.6px;letter-spacing:0.99px;color:#202124;-webkit-text-stroke:0.45px">Acquisition</div>
<div class="t" style="left:98.41px;top:370px;font-size:15.6px;letter-spacing:0.96px;color:#202124;-webkit-text-stroke:0.45px">Retention</div>
<div class="t" style="left:98.34px;top:412px;font-size:15.6px;letter-spacing:0.86px;color:#202124;-webkit-text-stroke:0.45px">Engagement</div>
<div class="t" style="left:98.35px;top:454px;font-size:15.6px;letter-spacing:1.16px;color:#202124;-webkit-text-stroke:0.45px">Monetisation</div>
<div class="t" style="left:80.1px;top:508px;font-size:15.6px;letter-spacing:0.47px;color:#5f6368;-webkit-text-stroke:0.45px">User</div>
<div class="t" style="left:98.4px;top:549px;font-size:15.6px;letter-spacing:1.04px;color:#202124;-webkit-text-stroke:0.45px">Demographics</div>
<div class="t" style="left:116.59px;top:591px;font-size:15.6px;letter-spacing:1.01px;color:#1967d2;-webkit-text-stroke:0.45px">Demographics overview</div>
<div class="t" style="left:116.49px;top:633px;font-size:15.6px;letter-spacing:0.96px;color:#202124;-webkit-text-stroke:0.45px">Demographic details</div>
<div class="t" style="left:99.44px;top:675px;font-size:15.6px;letter-spacing:0.87px;color:#202124;-webkit-text-stroke:0.45px">Tech</div>
<div class="t" style="left:117.58px;top:716px;font-size:15.6px;letter-spacing:0.91px;color:#202124;-webkit-text-stroke:0.45px">Tech overview</div>
<div class="t" style="left:399.17px;top:95px;font-size:25.6px;letter-spacing:0.29px;color:#202124;-webkit-text-stroke:0.15px">Demographics overview</div>
<div class="t" style="left:1151.15px;top:98px;font-size:11.6px;letter-spacing:0.24px;color:#3c4043;-webkit-text-stroke:0.3px">Last 28 days</div>
<div class="t" style="left:1232.2px;top:97px;font-size:16.1px;letter-spacing:0.17px;color:#3c4043;-webkit-text-stroke:0.5px">10 Nov - 7 Dec 2021</div>
<div class="t" style="left:408.47px;top:153px;font-size:16.4px;letter-spacing:0px;color:#fff;-webkit-text-stroke:0.2px">A</div>
<div class="t" style="left:435.61px;top:155px;font-size:13.5px;letter-spacing:-0.04px;color:#202124;-webkit-text-stroke:0.4px">All Users</div>
<div class="t" style="left:528.9px;top:155px;font-size:13.5px;letter-spacing:0.3px;color:#202124;-webkit-text-stroke:0.4px">Add comparison</div>
<div class="t" style="left:427.48px;top:279px;font-size:15.8px;letter-spacing:0.69px;color:#202124;-webkit-text-stroke:0.15px">Users</div>
<div class="t" style="left:496.93px;top:279px;font-size:15.8px;letter-spacing:1.14px;color:#202124;-webkit-text-stroke:0.15px">by Country</div>
<div class="t" style="left:830.11px;top:332px;font-size:13.4px;letter-spacing:0.58px;color:#5f6368;-webkit-text-stroke:0.3px">COUNTRY</div>
<div class="t" style="left:1048.1px;top:332px;font-size:13.4px;letter-spacing:0.27px;color:#5f6368;-webkit-text-stroke:0.3px">USERS</div>
<div class="t" style="left:959.75px;top:674px;font-size:15.6px;letter-spacing:1.03px;color:#1a73e8;-webkit-text-stroke:0.45px">View countries</div>
<div class="t" style="left:1170.7px;top:280px;font-size:13.6px;letter-spacing:0.29px;color:#5f6368;-webkit-text-stroke:0.2px">USERS IN LAST 30 MINUTES</div>
<div class="t" style="left:1170.85px;top:304px;font-size:41.5px;letter-spacing:1.09px;color:#202124">54</div>
<div class="t" style="left:1170.65px;top:364px;font-size:13.6px;letter-spacing:0.02px;color:#5f6368;-webkit-text-stroke:0.2px">USERS PER MINUTE</div>
<div class="t" style="left:1171.36px;top:458px;font-size:13.4px;letter-spacing:0.71px;color:#5f6368;-webkit-text-stroke:0.3px">TOP COUNTRIES</div>
<div class="t" style="left:1419.13px;top:458px;font-size:13.4px;letter-spacing:0.3px;color:#5f6368;-webkit-text-stroke:0.3px">USERS</div>
<div class="t" style="left:1336.35px;top:674px;font-size:15.6px;letter-spacing:0.87px;color:#1a73e8;-webkit-text-stroke:0.45px">View real time</div>
<div class="t" style="left:829.42px;top:368px;font-size:15px;letter-spacing:-0.06px;color:#202124;-webkit-text-stroke:0.25px">India</div>
<div class="t" style="left:1065.35px;top:368px;font-size:15px;letter-spacing:-0.38px;color:#3c4043;-webkit-text-stroke:0.25px">7.6K</div>
<div class="t" style="left:829.56px;top:405px;font-size:15px;letter-spacing:0.01px;color:#202124;-webkit-text-stroke:0.25px">United States</div>
<div class="t" style="left:1065.34px;top:405px;font-size:15px;letter-spacing:-0.38px;color:#3c4043;-webkit-text-stroke:0.25px">4.1K</div>
<div class="t" style="left:829.48px;top:442px;font-size:15px;letter-spacing:-0.62px;color:#202124;-webkit-text-stroke:0.25px">Kenya</div>
<div class="t" style="left:1064.9px;top:442px;font-size:15px;letter-spacing:-0.2px;color:#3c4043;-webkit-text-stroke:0.25px">1.7K</div>
<div class="t" style="left:829.62px;top:479px;font-size:15px;letter-spacing:-0.01px;color:#202124;-webkit-text-stroke:0.25px">Bangladesh</div>
<div class="t" style="left:1064.9px;top:479px;font-size:15px;letter-spacing:-0.2px;color:#3c4043;-webkit-text-stroke:0.25px">1.3K</div>
<div class="t" style="left:829.62px;top:517px;font-size:15px;letter-spacing:0.16px;color:#202124;-webkit-text-stroke:0.25px">Pakistan</div>
<div class="t" style="left:1064.9px;top:517px;font-size:15px;letter-spacing:-0.2px;color:#3c4043;-webkit-text-stroke:0.25px">1.2K</div>
<div class="t" style="left:829.58px;top:554px;font-size:15px;letter-spacing:0.01px;color:#202124;-webkit-text-stroke:0.25px">Nigeria</div>
<div class="t" style="left:1070.23px;top:554px;font-size:15px;letter-spacing:-0.21px;color:#3c4043;-webkit-text-stroke:0.25px">854</div>
<div class="t" style="left:829.56px;top:591px;font-size:15px;letter-spacing:0.09px;color:#202124;-webkit-text-stroke:0.25px">Brazil</div>
<div class="t" style="left:1070.23px;top:591px;font-size:15px;letter-spacing:-0.66px;color:#3c4043;-webkit-text-stroke:0.25px">691</div>
<div class="t" style="left:1170.21px;top:491px;font-size:15px;letter-spacing:0.06px;color:#202124;-webkit-text-stroke:0.25px">United States</div>
<div class="t" style="left:1450.78px;top:491px;font-size:15px;letter-spacing:-0.08px;color:#3c4043;-webkit-text-stroke:0.25px">28</div>
<div class="t" style="left:1170.33px;top:525px;font-size:15px;letter-spacing:0.03px;color:#202124;-webkit-text-stroke:0.25px">Nigeria</div>
<div class="t" style="left:1459.14px;top:525px;font-size:15px;letter-spacing:0px;color:#3c4043;-webkit-text-stroke:0.25px">4</div>
<div class="t" style="left:1170.32px;top:558px;font-size:15px;letter-spacing:0.04px;color:#202124;-webkit-text-stroke:0.25px">Bangladesh</div>
<div class="t" style="left:1459.22px;top:558px;font-size:15px;letter-spacing:0px;color:#3c4043;-webkit-text-stroke:0.25px">2</div>
<div class="t" style="left:1170.33px;top:592px;font-size:15px;letter-spacing:-0.46px;color:#202124;-webkit-text-stroke:0.25px">Kenya</div>
<div class="t" style="left:1459.22px;top:592px;font-size:15px;letter-spacing:0px;color:#3c4043;-webkit-text-stroke:0.25px">2</div>
<div class="t" style="left:1170.32px;top:626px;font-size:15px;letter-spacing:0.08px;color:#202124;-webkit-text-stroke:0.25px">Benin</div>
<div class="t" style="left:1459.05px;top:626px;font-size:15px;letter-spacing:0px;color:#3c4043;-webkit-text-stroke:0.25px">1</div>
</div>
</body>
</html>
